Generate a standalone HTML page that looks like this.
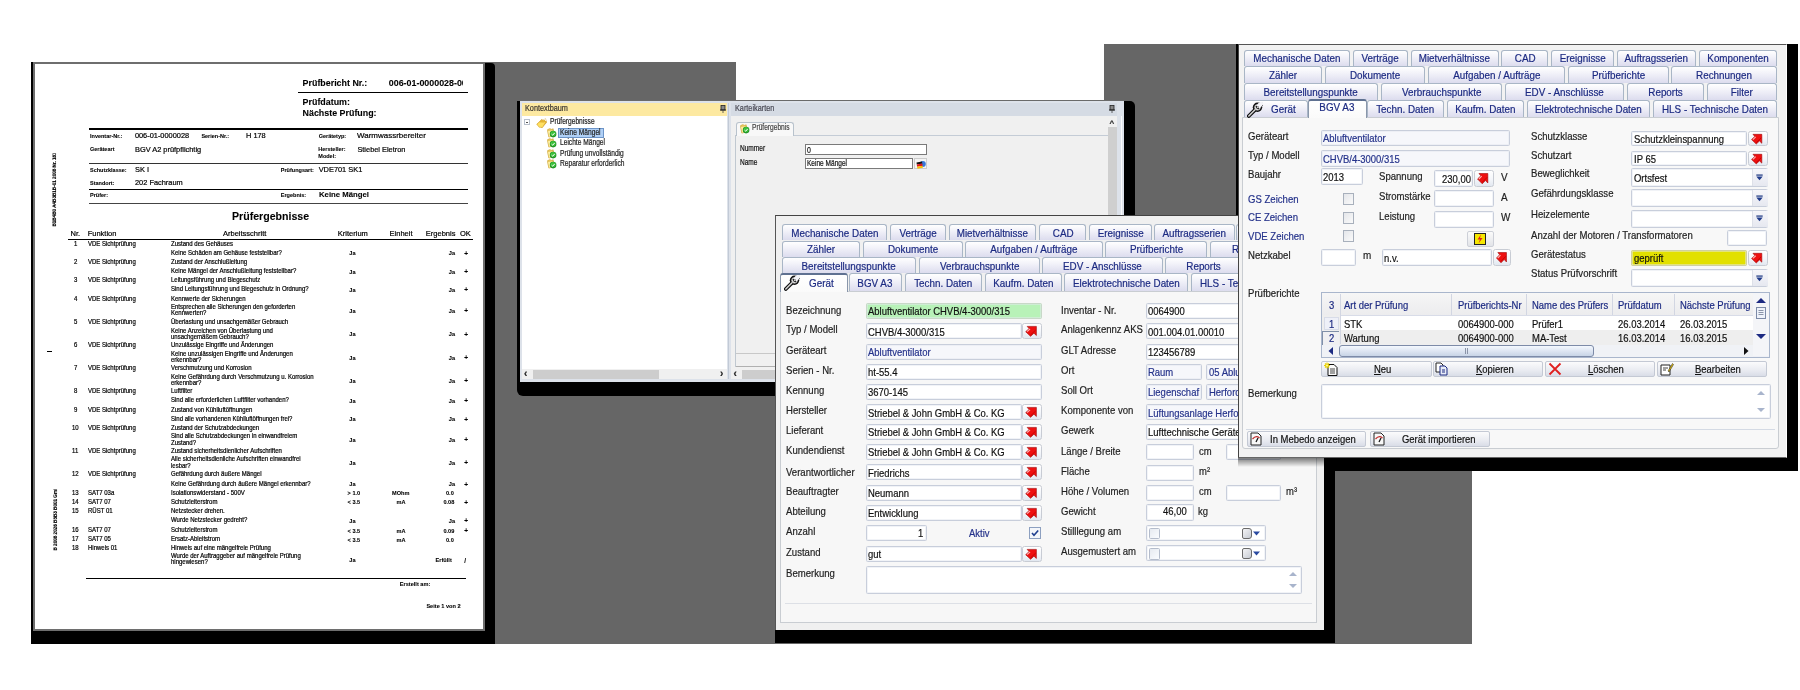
<!DOCTYPE html>
<html><head><meta charset="utf-8"><style>
html,body{margin:0;padding:0;width:1800px;height:690px;overflow:hidden;background:#fff}
body{position:relative;font-family:"Liberation Sans",sans-serif}
div,svg{position:absolute}
.t{white-space:nowrap;line-height:1;transform-origin:0 0;-webkit-text-stroke:0.2px currentColor}
.c{text-align:center}
</style></head><body><div id="w" style="left:0;top:0;width:1800px;height:690px;overflow:hidden;will-change:transform">
<div style="left:484px;top:62px;width:988px;height:581.5px;background:#666666"></div><div style="left:736px;top:62px;width:368px;height:37.5px;background:#fff"></div><div style="left:1104px;top:44px;width:368px;height:30px;background:#666666"></div><div style="left:31px;top:63px;width:464px;height:580.5px;background:#000;border-top-right-radius:4px"></div><div style="left:31px;top:62px;width:2px;height:2px;background:#000"></div><div style="left:33px;top:62px;width:452px;height:569px;background:#6e6e6e"></div><div style="left:35px;top:64px;width:448px;height:565px;background:#fff"></div><div style="left:35px;top:64px;width:448px;height:565px;overflow:hidden"><div class="t" style="left:267.6px;top:14.7px;font-size:8.9px;color:#000;font-weight:bold;-webkit-text-stroke:0.08px #000">Prüfbericht Nr.:</div><div class="t" style="left:353.8px;top:14.7px;font-size:8.9px;color:#000;font-weight:bold;-webkit-text-stroke:0.08px #000">006-01-0000028-000</div><div style="left:428px;top:14px;width:20px;height:12px;background:#fff"></div><div style="left:263px;top:27.799999999999997px;width:169.5px;height:1.5px;background:#000"></div><div class="t" style="left:267.6px;top:34.2px;font-size:8.9px;color:#000;font-weight:bold;-webkit-text-stroke:0.08px #000">Prüfdatum:</div><div class="t" style="left:267.6px;top:45.2px;font-size:8.9px;color:#000;font-weight:bold;-webkit-text-stroke:0.08px #000">Nächste Prüfung:</div><div style="left:54px;top:64.0px;width:378.5px;height:1.5px;background:#000"></div><div class="t" style="left:55.0px;top:69.6px;font-size:5.5px;color:#000;font-weight:bold;-webkit-text-stroke:0.08px #000">Inventar-Nr.:</div><div class="t" style="left:99.9px;top:68.0px;font-size:7.4px;color:#000;-webkit-text-stroke:0.2px #000">006-01-0000028</div><div class="t" style="left:166.4px;top:69.6px;font-size:5.5px;color:#000;font-weight:bold;-webkit-text-stroke:0.08px #000">Serien-Nr.:</div><div class="t" style="left:211.0px;top:68.0px;font-size:7.4px;color:#000;-webkit-text-stroke:0.2px #000">H 178</div><div class="t" style="left:283.7px;top:69.6px;font-size:5.5px;color:#000;font-weight:bold;-webkit-text-stroke:0.08px #000">Gerätetyp:</div><div class="t" style="left:322.4px;top:68.0px;font-size:7.4px;color:#000;transform:scaleX(1.08);-webkit-text-stroke:0.2px #000">Warmwassrbereiter</div><div class="t" style="left:55.0px;top:83.1px;font-size:5.5px;color:#000;font-weight:bold;-webkit-text-stroke:0.08px #000">Geräteart</div><div class="t" style="left:100.0px;top:81.5px;font-size:7.4px;color:#000;-webkit-text-stroke:0.2px #000">BGV A2 prüfpflichtig</div><div class="t" style="left:283.3px;top:83.1px;font-size:5.5px;color:#000;font-weight:bold;-webkit-text-stroke:0.08px #000">Hersteller:</div><div class="t" style="left:322.4px;top:81.5px;font-size:7.4px;color:#000;-webkit-text-stroke:0.2px #000">Stiebel Eletron</div><div class="t" style="left:283.3px;top:90.3px;font-size:5.5px;color:#000;font-weight:bold;-webkit-text-stroke:0.08px #000">Model:</div><div style="left:54px;top:99.0px;width:378.5px;height:1.0px;background:#333"></div><div class="t" style="left:55.0px;top:103.9px;font-size:5.5px;color:#000;font-weight:bold;-webkit-text-stroke:0.08px #000">Schutzklasse:</div><div class="t" style="left:100.0px;top:102.3px;font-size:7.4px;color:#000;-webkit-text-stroke:0.2px #000">SK I</div><div class="t" style="left:245.8px;top:103.9px;font-size:5.5px;color:#000;font-weight:bold;-webkit-text-stroke:0.08px #000">Prüfungsart:</div><div class="t" style="left:283.7px;top:102.3px;font-size:7.4px;color:#000;-webkit-text-stroke:0.2px #000">VDE701 SK1</div><div class="t" style="left:55.0px;top:116.8px;font-size:5.5px;color:#000;font-weight:bold;-webkit-text-stroke:0.08px #000">Standort:</div><div class="t" style="left:100.0px;top:115.2px;font-size:7.4px;color:#000;-webkit-text-stroke:0.2px #000">202 Fachraum</div><div style="left:54px;top:125.19999999999999px;width:378.5px;height:1.3px;background:#000"></div><div class="t" style="left:55.0px;top:129.0px;font-size:5.5px;color:#000;font-weight:bold;-webkit-text-stroke:0.08px #000">Prüfer:</div><div class="t" style="left:245.8px;top:129.0px;font-size:5.5px;color:#000;font-weight:bold;-webkit-text-stroke:0.08px #000">Ergebnis:</div><div class="t" style="left:284.0px;top:127.4px;font-size:7.4px;color:#000;font-weight:bold;transform:scaleX(1.05);-webkit-text-stroke:0.08px #000">Keine Mängel</div><div style="left:54px;top:138.6px;width:378.5px;height:1.0px;background:#444"></div><div class="t" style="left:197.0px;top:147.2px;font-size:10.6px;color:#000;font-weight:bold;-webkit-text-stroke:0.08px #000">Prüfergebnisse</div><div class="t" style="left:35.6px;top:165.6px;font-size:7.5px;color:#000;-webkit-text-stroke:0.2px #000">Nr.</div><div class="t" style="left:52.7px;top:165.6px;font-size:7.5px;color:#000;-webkit-text-stroke:0.2px #000">Funktion</div><div class="t" style="left:188.0px;top:165.6px;font-size:7.5px;color:#000;-webkit-text-stroke:0.2px #000">Arbeitsschritt</div><div class="t" style="left:302.8px;top:165.6px;font-size:7.5px;color:#000;-webkit-text-stroke:0.2px #000">Kriterium</div><div class="t" style="left:354.6px;top:165.6px;font-size:7.5px;color:#000;-webkit-text-stroke:0.2px #000">Einheit</div><div class="t" style="left:390.8px;top:165.6px;font-size:7.5px;color:#000;-webkit-text-stroke:0.2px #000">Ergebnis</div><div class="t" style="left:425.0px;top:165.6px;font-size:7.5px;color:#000;-webkit-text-stroke:0.2px #000">OK</div><div style="left:33px;top:174.8px;width:404.7px;height:1.5px;background:#000"></div><div class="t" style="left:39.2px;top:176.6px;font-size:6.4px;color:#000;transform:scaleX(0.94);-webkit-text-stroke:0.2px #000">1</div><div class="t" style="left:52.7px;top:176.6px;font-size:6.4px;color:#000;transform:scaleX(0.94);-webkit-text-stroke:0.2px #000">VDE Sichtprüfung</div><div class="t" style="left:136.3px;top:176.6px;font-size:6.4px;color:#000;transform:scaleX(0.94);-webkit-text-stroke:0.2px #000">Zustand des Gehäuses</div><div class="t" style="left:136.3px;top:185.6px;font-size:6.4px;color:#000;transform:scaleX(0.94);-webkit-text-stroke:0.2px #000">Keine Schäden am Gehäuse feststellbar?</div><div class="t" style="left:314.3px;top:187.2px;font-size:5.6px;color:#000;font-weight:bold;-webkit-text-stroke:0.08px #000">Ja</div><div class="t" style="left:413.8px;top:187.2px;font-size:5.6px;color:#000;font-weight:bold;-webkit-text-stroke:0.08px #000">Ja</div><div class="t" style="left:429.2px;top:186.5px;font-size:6.5px;color:#000;font-weight:bold;-webkit-text-stroke:0.08px #000">+</div><div class="t" style="left:39.2px;top:194.9px;font-size:6.4px;color:#000;transform:scaleX(0.94);-webkit-text-stroke:0.2px #000">2</div><div class="t" style="left:52.7px;top:194.9px;font-size:6.4px;color:#000;transform:scaleX(0.94);-webkit-text-stroke:0.2px #000">VDE Sichtprüfung</div><div class="t" style="left:136.3px;top:194.9px;font-size:6.4px;color:#000;transform:scaleX(0.94);-webkit-text-stroke:0.2px #000">Zustand der Anschlußleitung</div><div class="t" style="left:136.3px;top:204.2px;font-size:6.4px;color:#000;transform:scaleX(0.94);-webkit-text-stroke:0.2px #000">Keine Mängel der Anschlußleitung feststellbar?</div><div class="t" style="left:314.3px;top:205.8px;font-size:5.6px;color:#000;font-weight:bold;-webkit-text-stroke:0.08px #000">Ja</div><div class="t" style="left:413.8px;top:205.8px;font-size:5.6px;color:#000;font-weight:bold;-webkit-text-stroke:0.08px #000">Ja</div><div class="t" style="left:429.2px;top:205.1px;font-size:6.5px;color:#000;font-weight:bold;-webkit-text-stroke:0.08px #000">+</div><div class="t" style="left:39.2px;top:213.3px;font-size:6.4px;color:#000;transform:scaleX(0.94);-webkit-text-stroke:0.2px #000">3</div><div class="t" style="left:52.7px;top:213.3px;font-size:6.4px;color:#000;transform:scaleX(0.94);-webkit-text-stroke:0.2px #000">VDE Sichtprüfung</div><div class="t" style="left:136.3px;top:213.3px;font-size:6.4px;color:#000;transform:scaleX(0.94);-webkit-text-stroke:0.2px #000">Leitungsführung und Biegeschutz</div><div class="t" style="left:136.3px;top:222.3px;font-size:6.4px;color:#000;transform:scaleX(0.94);-webkit-text-stroke:0.2px #000">Sind Leitungsführung und Biegeschutz in Ordnung?</div><div class="t" style="left:314.3px;top:223.9px;font-size:5.6px;color:#000;font-weight:bold;-webkit-text-stroke:0.08px #000">Ja</div><div class="t" style="left:413.8px;top:223.9px;font-size:5.6px;color:#000;font-weight:bold;-webkit-text-stroke:0.08px #000">Ja</div><div class="t" style="left:429.2px;top:223.2px;font-size:6.5px;color:#000;font-weight:bold;-webkit-text-stroke:0.08px #000">+</div><div class="t" style="left:39.2px;top:231.6px;font-size:6.4px;color:#000;transform:scaleX(0.94);-webkit-text-stroke:0.2px #000">4</div><div class="t" style="left:52.7px;top:231.6px;font-size:6.4px;color:#000;transform:scaleX(0.94);-webkit-text-stroke:0.2px #000">VDE Sichtprüfung</div><div class="t" style="left:136.3px;top:231.6px;font-size:6.4px;color:#000;transform:scaleX(0.94);-webkit-text-stroke:0.2px #000">Kennwerte der Sicherungen</div><div class="t" style="left:136.3px;top:240.2px;font-size:6.4px;color:#000;transform:scaleX(0.94);-webkit-text-stroke:0.2px #000">Entsprechen alle Sicherungen den geforderten</div><div class="t" style="left:136.3px;top:246.3px;font-size:6.4px;color:#000;transform:scaleX(0.94);-webkit-text-stroke:0.2px #000">Kennwerten?</div><div class="t" style="left:314.3px;top:244.9px;font-size:5.6px;color:#000;font-weight:bold;-webkit-text-stroke:0.08px #000">Ja</div><div class="t" style="left:413.8px;top:244.9px;font-size:5.6px;color:#000;font-weight:bold;-webkit-text-stroke:0.08px #000">Ja</div><div class="t" style="left:429.2px;top:244.2px;font-size:6.5px;color:#000;font-weight:bold;-webkit-text-stroke:0.08px #000">+</div><div class="t" style="left:39.2px;top:254.8px;font-size:6.4px;color:#000;transform:scaleX(0.94);-webkit-text-stroke:0.2px #000">5</div><div class="t" style="left:52.7px;top:254.8px;font-size:6.4px;color:#000;transform:scaleX(0.94);-webkit-text-stroke:0.2px #000">VDE Sichtprüfung</div><div class="t" style="left:136.3px;top:254.8px;font-size:6.4px;color:#000;transform:scaleX(0.94);-webkit-text-stroke:0.2px #000">Überlastung und unsachgemäßer Gebrauch</div><div class="t" style="left:136.3px;top:264.1px;font-size:6.4px;color:#000;transform:scaleX(0.94);-webkit-text-stroke:0.2px #000">Keine Anzeichen von Überlastung und</div><div class="t" style="left:136.3px;top:270.2px;font-size:6.4px;color:#000;transform:scaleX(0.94);-webkit-text-stroke:0.2px #000">unsachgemäßem Gebrauch?</div><div class="t" style="left:314.3px;top:268.4px;font-size:5.6px;color:#000;font-weight:bold;-webkit-text-stroke:0.08px #000">Ja</div><div class="t" style="left:413.8px;top:268.4px;font-size:5.6px;color:#000;font-weight:bold;-webkit-text-stroke:0.08px #000">Ja</div><div class="t" style="left:429.2px;top:267.7px;font-size:6.5px;color:#000;font-weight:bold;-webkit-text-stroke:0.08px #000">+</div><div class="t" style="left:39.2px;top:278.1px;font-size:6.4px;color:#000;transform:scaleX(0.94);-webkit-text-stroke:0.2px #000">6</div><div class="t" style="left:52.7px;top:278.1px;font-size:6.4px;color:#000;transform:scaleX(0.94);-webkit-text-stroke:0.2px #000">VDE Sichtprüfung</div><div class="t" style="left:136.3px;top:278.1px;font-size:6.4px;color:#000;transform:scaleX(0.94);-webkit-text-stroke:0.2px #000">Unzulässige Eingriffe und Änderungen</div><div class="t" style="left:136.3px;top:287.2px;font-size:6.4px;color:#000;transform:scaleX(0.94);-webkit-text-stroke:0.2px #000">Keine unzulässigen Eingriffe und Änderungen</div><div class="t" style="left:136.3px;top:293.3px;font-size:6.4px;color:#000;transform:scaleX(0.94);-webkit-text-stroke:0.2px #000">erkennbar?</div><div class="t" style="left:314.3px;top:291.7px;font-size:5.6px;color:#000;font-weight:bold;-webkit-text-stroke:0.08px #000">Ja</div><div class="t" style="left:413.8px;top:291.7px;font-size:5.6px;color:#000;font-weight:bold;-webkit-text-stroke:0.08px #000">Ja</div><div class="t" style="left:429.2px;top:291.0px;font-size:6.5px;color:#000;font-weight:bold;-webkit-text-stroke:0.08px #000">+</div><div class="t" style="left:39.2px;top:301.3px;font-size:6.4px;color:#000;transform:scaleX(0.94);-webkit-text-stroke:0.2px #000">7</div><div class="t" style="left:52.7px;top:301.3px;font-size:6.4px;color:#000;transform:scaleX(0.94);-webkit-text-stroke:0.2px #000">VDE Sichtprüfung</div><div class="t" style="left:136.3px;top:301.3px;font-size:6.4px;color:#000;transform:scaleX(0.94);-webkit-text-stroke:0.2px #000">Verschmutzung und Korrosion</div><div class="t" style="left:136.3px;top:310.3px;font-size:6.4px;color:#000;transform:scaleX(0.94);-webkit-text-stroke:0.2px #000">Keine Gefährdung durch Verschmutzung u. Korrosion</div><div class="t" style="left:136.3px;top:316.4px;font-size:6.4px;color:#000;transform:scaleX(0.94);-webkit-text-stroke:0.2px #000">erkennbar?</div><div class="t" style="left:314.3px;top:314.9px;font-size:5.6px;color:#000;font-weight:bold;-webkit-text-stroke:0.08px #000">Ja</div><div class="t" style="left:413.8px;top:314.9px;font-size:5.6px;color:#000;font-weight:bold;-webkit-text-stroke:0.08px #000">Ja</div><div class="t" style="left:429.2px;top:314.2px;font-size:6.5px;color:#000;font-weight:bold;-webkit-text-stroke:0.08px #000">+</div><div class="t" style="left:39.2px;top:324.2px;font-size:6.4px;color:#000;transform:scaleX(0.94);-webkit-text-stroke:0.2px #000">8</div><div class="t" style="left:52.7px;top:324.2px;font-size:6.4px;color:#000;transform:scaleX(0.94);-webkit-text-stroke:0.2px #000">VDE Sichtprüfung</div><div class="t" style="left:136.3px;top:324.2px;font-size:6.4px;color:#000;transform:scaleX(0.94);-webkit-text-stroke:0.2px #000">Luftfilter</div><div class="t" style="left:136.3px;top:333.2px;font-size:6.4px;color:#000;transform:scaleX(0.94);-webkit-text-stroke:0.2px #000">Sind alle erforderlichen Luftfilter vorhanden?</div><div class="t" style="left:314.3px;top:334.8px;font-size:5.6px;color:#000;font-weight:bold;-webkit-text-stroke:0.08px #000">Ja</div><div class="t" style="left:413.8px;top:334.8px;font-size:5.6px;color:#000;font-weight:bold;-webkit-text-stroke:0.08px #000">Ja</div><div class="t" style="left:429.2px;top:334.1px;font-size:6.5px;color:#000;font-weight:bold;-webkit-text-stroke:0.08px #000">+</div><div class="t" style="left:39.2px;top:342.5px;font-size:6.4px;color:#000;transform:scaleX(0.94);-webkit-text-stroke:0.2px #000">9</div><div class="t" style="left:52.7px;top:342.5px;font-size:6.4px;color:#000;transform:scaleX(0.94);-webkit-text-stroke:0.2px #000">VDE Sichtprüfung</div><div class="t" style="left:136.3px;top:342.5px;font-size:6.4px;color:#000;transform:scaleX(0.94);-webkit-text-stroke:0.2px #000">Zustand von Kühlluftöffnungen</div><div class="t" style="left:136.3px;top:351.6px;font-size:6.4px;color:#000;transform:scaleX(0.94);-webkit-text-stroke:0.2px #000">Sind alle vorhandenen Kühlluftöffnungen frei?</div><div class="t" style="left:314.3px;top:353.2px;font-size:5.6px;color:#000;font-weight:bold;-webkit-text-stroke:0.08px #000">Ja</div><div class="t" style="left:413.8px;top:353.2px;font-size:5.6px;color:#000;font-weight:bold;-webkit-text-stroke:0.08px #000">Ja</div><div class="t" style="left:429.2px;top:352.5px;font-size:6.5px;color:#000;font-weight:bold;-webkit-text-stroke:0.08px #000">+</div><div class="t" style="left:36.5px;top:360.8px;font-size:6.4px;color:#000;transform:scaleX(0.94);-webkit-text-stroke:0.2px #000">10</div><div class="t" style="left:52.7px;top:360.8px;font-size:6.4px;color:#000;transform:scaleX(0.94);-webkit-text-stroke:0.2px #000">VDE Sichtprüfung</div><div class="t" style="left:136.3px;top:360.8px;font-size:6.4px;color:#000;transform:scaleX(0.94);-webkit-text-stroke:0.2px #000">Zustand der Schutzabdeckungen</div><div class="t" style="left:136.3px;top:368.9px;font-size:6.4px;color:#000;transform:scaleX(0.94);-webkit-text-stroke:0.2px #000">Sind alle Schutzabdeckungen in einwandfreiem</div><div class="t" style="left:136.3px;top:375.5px;font-size:6.4px;color:#000;transform:scaleX(0.94);-webkit-text-stroke:0.2px #000">Zustand?</div><div class="t" style="left:314.3px;top:373.9px;font-size:5.6px;color:#000;font-weight:bold;-webkit-text-stroke:0.08px #000">Ja</div><div class="t" style="left:413.8px;top:373.9px;font-size:5.6px;color:#000;font-weight:bold;-webkit-text-stroke:0.08px #000">Ja</div><div class="t" style="left:429.2px;top:373.2px;font-size:6.5px;color:#000;font-weight:bold;-webkit-text-stroke:0.08px #000">+</div><div class="t" style="left:36.5px;top:384.1px;font-size:6.4px;color:#000;transform:scaleX(0.94);-webkit-text-stroke:0.2px #000">11</div><div class="t" style="left:52.7px;top:384.1px;font-size:6.4px;color:#000;transform:scaleX(0.94);-webkit-text-stroke:0.2px #000">VDE Sichtprüfung</div><div class="t" style="left:136.3px;top:384.1px;font-size:6.4px;color:#000;transform:scaleX(0.94);-webkit-text-stroke:0.2px #000">Zustand sicherheitsdienlicher Aufschriften</div><div class="t" style="left:136.3px;top:391.9px;font-size:6.4px;color:#000;transform:scaleX(0.94);-webkit-text-stroke:0.2px #000">Alle sicherheitsdienliche Aufschriften einwandfrei</div><div class="t" style="left:136.3px;top:398.7px;font-size:6.4px;color:#000;transform:scaleX(0.94);-webkit-text-stroke:0.2px #000">lesbar?</div><div class="t" style="left:314.3px;top:396.9px;font-size:5.6px;color:#000;font-weight:bold;-webkit-text-stroke:0.08px #000">Ja</div><div class="t" style="left:413.8px;top:396.9px;font-size:5.6px;color:#000;font-weight:bold;-webkit-text-stroke:0.08px #000">Ja</div><div class="t" style="left:429.2px;top:396.2px;font-size:6.5px;color:#000;font-weight:bold;-webkit-text-stroke:0.08px #000">+</div><div class="t" style="left:36.5px;top:407.3px;font-size:6.4px;color:#000;transform:scaleX(0.94);-webkit-text-stroke:0.2px #000">12</div><div class="t" style="left:52.7px;top:407.3px;font-size:6.4px;color:#000;transform:scaleX(0.94);-webkit-text-stroke:0.2px #000">VDE Sichtprüfung</div><div class="t" style="left:136.3px;top:407.3px;font-size:6.4px;color:#000;transform:scaleX(0.94);-webkit-text-stroke:0.2px #000">Gefährdung durch äußere Mängel</div><div class="t" style="left:136.3px;top:416.6px;font-size:6.4px;color:#000;transform:scaleX(0.94);-webkit-text-stroke:0.2px #000">Keine Gefährdung durch äußere Mängel erkennbar?</div><div class="t" style="left:314.3px;top:418.2px;font-size:5.6px;color:#000;font-weight:bold;-webkit-text-stroke:0.08px #000">Ja</div><div class="t" style="left:413.8px;top:418.2px;font-size:5.6px;color:#000;font-weight:bold;-webkit-text-stroke:0.08px #000">Ja</div><div class="t" style="left:429.2px;top:417.5px;font-size:6.5px;color:#000;font-weight:bold;-webkit-text-stroke:0.08px #000">+</div><div class="t" style="left:36.5px;top:425.6px;font-size:6.4px;color:#000;transform:scaleX(0.94);-webkit-text-stroke:0.2px #000">13</div><div class="t" style="left:52.7px;top:425.6px;font-size:6.4px;color:#000;transform:scaleX(0.94);-webkit-text-stroke:0.2px #000">SAT7 03a</div><div class="t" style="left:136.3px;top:425.6px;font-size:6.4px;color:#000;transform:scaleX(0.94);-webkit-text-stroke:0.2px #000">Isolationswiderstand - 500V</div><div class="t" style="left:312.6px;top:427.2px;font-size:5.6px;color:#000;font-weight:bold;-webkit-text-stroke:0.08px #000">&gt; 1.0</div><div class="t" style="left:357.0px;top:427.2px;font-size:5.6px;color:#000;font-weight:bold;-webkit-text-stroke:0.08px #000">MOhm</div><div class="t" style="left:411.0px;top:427.2px;font-size:5.6px;color:#000;font-weight:bold;-webkit-text-stroke:0.08px #000">0.0</div><div class="t" style="left:36.5px;top:434.6px;font-size:6.4px;color:#000;transform:scaleX(0.94);-webkit-text-stroke:0.2px #000">14</div><div class="t" style="left:52.7px;top:434.6px;font-size:6.4px;color:#000;transform:scaleX(0.94);-webkit-text-stroke:0.2px #000">SAT7 07</div><div class="t" style="left:136.3px;top:434.6px;font-size:6.4px;color:#000;transform:scaleX(0.94);-webkit-text-stroke:0.2px #000">Schutzleiterstrom</div><div class="t" style="left:312.6px;top:436.2px;font-size:5.6px;color:#000;font-weight:bold;-webkit-text-stroke:0.08px #000">&lt; 3.5</div><div class="t" style="left:361.5px;top:436.2px;font-size:5.6px;color:#000;font-weight:bold;-webkit-text-stroke:0.08px #000">mA</div><div class="t" style="left:408.4px;top:436.2px;font-size:5.6px;color:#000;font-weight:bold;-webkit-text-stroke:0.08px #000">0.08</div><div class="t" style="left:429.2px;top:435.5px;font-size:6.5px;color:#000;font-weight:bold;-webkit-text-stroke:0.08px #000">+</div><div class="t" style="left:36.5px;top:444.0px;font-size:6.4px;color:#000;transform:scaleX(0.94);-webkit-text-stroke:0.2px #000">15</div><div class="t" style="left:52.7px;top:444.0px;font-size:6.4px;color:#000;transform:scaleX(0.94);-webkit-text-stroke:0.2px #000">RÜST 01</div><div class="t" style="left:136.3px;top:444.0px;font-size:6.4px;color:#000;transform:scaleX(0.94);-webkit-text-stroke:0.2px #000">Netzstecker drehen.</div><div class="t" style="left:136.3px;top:453.0px;font-size:6.4px;color:#000;transform:scaleX(0.94);-webkit-text-stroke:0.2px #000">Wurde Netzstecker gedreht?</div><div class="t" style="left:314.3px;top:454.6px;font-size:5.6px;color:#000;font-weight:bold;-webkit-text-stroke:0.08px #000">Ja</div><div class="t" style="left:413.8px;top:454.6px;font-size:5.6px;color:#000;font-weight:bold;-webkit-text-stroke:0.08px #000">Ja</div><div class="t" style="left:429.2px;top:453.9px;font-size:6.5px;color:#000;font-weight:bold;-webkit-text-stroke:0.08px #000">+</div><div class="t" style="left:36.5px;top:463.0px;font-size:6.4px;color:#000;transform:scaleX(0.94);-webkit-text-stroke:0.2px #000">16</div><div class="t" style="left:52.7px;top:463.0px;font-size:6.4px;color:#000;transform:scaleX(0.94);-webkit-text-stroke:0.2px #000">SAT7 07</div><div class="t" style="left:136.3px;top:463.0px;font-size:6.4px;color:#000;transform:scaleX(0.94);-webkit-text-stroke:0.2px #000">Schutzleiterstrom</div><div class="t" style="left:312.6px;top:464.6px;font-size:5.6px;color:#000;font-weight:bold;-webkit-text-stroke:0.08px #000">&lt; 3.5</div><div class="t" style="left:361.5px;top:464.6px;font-size:5.6px;color:#000;font-weight:bold;-webkit-text-stroke:0.08px #000">mA</div><div class="t" style="left:408.4px;top:464.6px;font-size:5.6px;color:#000;font-weight:bold;-webkit-text-stroke:0.08px #000">0.09</div><div class="t" style="left:429.2px;top:463.9px;font-size:6.5px;color:#000;font-weight:bold;-webkit-text-stroke:0.08px #000">+</div><div class="t" style="left:36.5px;top:472.1px;font-size:6.4px;color:#000;transform:scaleX(0.94);-webkit-text-stroke:0.2px #000">17</div><div class="t" style="left:52.7px;top:472.1px;font-size:6.4px;color:#000;transform:scaleX(0.94);-webkit-text-stroke:0.2px #000">SAT7 05</div><div class="t" style="left:136.3px;top:472.1px;font-size:6.4px;color:#000;transform:scaleX(0.94);-webkit-text-stroke:0.2px #000">Ersatz-Ableitstrom</div><div class="t" style="left:312.6px;top:473.7px;font-size:5.6px;color:#000;font-weight:bold;-webkit-text-stroke:0.08px #000">&lt; 3.5</div><div class="t" style="left:361.5px;top:473.7px;font-size:5.6px;color:#000;font-weight:bold;-webkit-text-stroke:0.08px #000">mA</div><div class="t" style="left:411.0px;top:473.7px;font-size:5.6px;color:#000;font-weight:bold;-webkit-text-stroke:0.08px #000">0.0</div><div class="t" style="left:36.5px;top:480.6px;font-size:6.4px;color:#000;transform:scaleX(0.94);-webkit-text-stroke:0.2px #000">18</div><div class="t" style="left:52.7px;top:480.6px;font-size:6.4px;color:#000;transform:scaleX(0.94);-webkit-text-stroke:0.2px #000">Hinweis 01</div><div class="t" style="left:136.3px;top:480.6px;font-size:6.4px;color:#000;transform:scaleX(0.94);-webkit-text-stroke:0.2px #000">Hinweis auf eine mängelfreie Prüfung</div><div class="t" style="left:136.3px;top:488.7px;font-size:6.4px;color:#000;transform:scaleX(0.94);-webkit-text-stroke:0.2px #000">Wurde der Auftraggeber auf mängelfreie Prüfung</div><div class="t" style="left:136.3px;top:495.1px;font-size:6.4px;color:#000;transform:scaleX(0.94);-webkit-text-stroke:0.2px #000">hingewiesen?</div><div class="t" style="left:314.3px;top:494.2px;font-size:5.6px;color:#000;font-weight:bold;-webkit-text-stroke:0.08px #000">Ja</div><div class="t" style="left:400.6px;top:494.2px;font-size:5.6px;color:#000;font-weight:bold;-webkit-text-stroke:0.08px #000">Erfüllt</div><div class="t" style="left:429.2px;top:493.5px;font-size:6.5px;color:#000;font-weight:bold;-webkit-text-stroke:0.08px #000">/</div><div style="left:50.5px;top:513.5px;width:380.0px;height:1.3px;background:#000"></div><div class="t" style="left:364.8px;top:518.2px;font-size:5.6px;color:#000;font-weight:bold;-webkit-text-stroke:0.08px #000">Erstellt am:</div><div class="t" style="left:391.4px;top:540.2px;font-size:5.6px;color:#000;font-weight:bold;-webkit-text-stroke:0.08px #000">Seite 1 von 2</div></div><div class="t" style="left:17.5px;top:188px;width:73px;height:4px;font-size:4.6px;font-weight:bold;transform:rotate(-90deg);transform-origin:50% 50%;text-align:justify;text-align-last:justify;overflow:hidden">B1B4B0 A4B3B1B-01 2008 Nr. 181204</div><div class="t" style="left:24.5px;top:518px;width:61px;height:4px;font-size:4.6px;font-weight:bold;transform:rotate(-90deg);transform-origin:50% 50%;text-align:justify;text-align-last:justify;overflow:hidden">B 2008 2026 B5B3 B001 GmbH Nr.</div><div style="left:47px;top:351px;width:5px;height:1px;background:#000"></div>
<div style="left:517px;top:100.5px;width:618px;height:295.5px;background:#000;border-radius:0 5px 0 6px"></div><div style="left:520px;top:100px;width:604px;height:282px;background:#dde2ea;border-top:1px solid #6a6a6a;box-sizing:border-box"></div><div style="left:727.5px;top:103px;width:1.2px;height:276px;background:#c2cad6"></div><div style="left:522px;top:103px;width:205px;height:13px;background:#fde9a1"></div><div class="t" style="left:525.2px;top:105.0px;font-size:8.2px;color:#3a3530;transform:scaleX(0.89);">Kontextbaum</div><svg style="position:absolute;left:719.5px;top:104.5px" width="6" height="8" viewBox="0 0 6 8"><rect x="1" y="0.5" width="4" height="4.5" fill="#888" stroke="#222" stroke-width="0.8"/><path d="M0 5 H6" stroke="#222" stroke-width="1"/><path d="M3 5 V8" stroke="#444" stroke-width="0.8"/></svg><div style="left:522px;top:116px;width:205px;height:263px;background:#fff"></div><div style="left:522px;top:369px;width:205px;height:10px;background:#f0f0f0"></div><div style="left:533px;top:369.6px;width:126px;height:9px;background:#cdcdcd"></div><div class="t" style="left:524.0px;top:368.5px;font-size:10px;color:#222;font-weight:bold;">‹</div><div class="t" style="left:720.0px;top:368.5px;font-size:10px;color:#222;font-weight:bold;">›</div><div style="left:524.2px;top:119.2px;width:5.5px;height:5.5px;border:1px solid #b8c0cc;background:#fff;box-sizing:border-box"></div><div style="left:525.6px;top:121.6px;width:2.7px;height:0.9px;background:#555"></div><svg style="position:absolute;left:535.5px;top:117.5px" width="11" height="10" viewBox="0 0 11 10"><path d="M1 6.5 L5.5 1.5 L7 2.2 L9.5 0.8 L10.5 4.5 L6 9.5 Z" fill="#e8b830" stroke="#c89020" stroke-width="0.6"/><path d="M0.8 6 L3.5 4 L7.5 4.2 L10 3.5 L6.5 9.5 L3 9.2 Z" fill="#ffe060" stroke="#d0a030" stroke-width="0.5"/><path d="M7.6 1.8 L9.2 1 L9.6 3" stroke="#fff" stroke-width="0.8" fill="none"/></svg><div class="t" style="left:549.7px;top:117.8px;font-size:8.2px;color:#222;transform:scaleX(0.81);">Prüfergebnisse</div><div style="left:558px;top:128.1px;width:45.6px;height:9.6px;background:#b0d0f6;border:1px solid #6c94c8;box-sizing:border-box"></div><svg style="position:absolute;left:546.8px;top:127.80000000000001px" width="10" height="10" viewBox="0 0 10 10"><path d="M0.6 1.6 L3 0.6 L4.2 1.4 L6.2 0.8 L6.8 6 L1.8 8.8 Z" fill="#f2d060" stroke="#c8a030" stroke-width="0.6"/><path d="M0.5 2.6 L5.8 2 L6.8 7.5 L2 9.2 Z" fill="#fff0a0" stroke="#d0a840" stroke-width="0.5"/><circle cx="6.1" cy="6.1" r="3.3" fill="#1f8f24"/><circle cx="6.1" cy="5.6" r="2.6" fill="#3cc03c"/><path d="M4.6 6.2 L5.7 7.2 L7.7 4.9" stroke="#fff" stroke-width="1" fill="none"/></svg><div class="t" style="left:560.3px;top:128.9px;font-size:8.2px;color:#222;transform:scaleX(0.81);">Keine Mängel</div><svg style="position:absolute;left:546.8px;top:138.20000000000002px" width="10" height="10" viewBox="0 0 10 10"><path d="M0.6 1.6 L3 0.6 L4.2 1.4 L6.2 0.8 L6.8 6 L1.8 8.8 Z" fill="#f2d060" stroke="#c8a030" stroke-width="0.6"/><path d="M0.5 2.6 L5.8 2 L6.8 7.5 L2 9.2 Z" fill="#fff0a0" stroke="#d0a840" stroke-width="0.5"/><circle cx="6.1" cy="6.1" r="3.3" fill="#1f8f24"/><circle cx="6.1" cy="5.6" r="2.6" fill="#3cc03c"/><path d="M4.6 6.2 L5.7 7.2 L7.7 4.9" stroke="#fff" stroke-width="1" fill="none"/></svg><div class="t" style="left:560.3px;top:139.3px;font-size:8.2px;color:#222;transform:scaleX(0.81);">Leichte Mängel</div><svg style="position:absolute;left:546.8px;top:148.6px" width="10" height="10" viewBox="0 0 10 10"><path d="M0.6 1.6 L3 0.6 L4.2 1.4 L6.2 0.8 L6.8 6 L1.8 8.8 Z" fill="#f2d060" stroke="#c8a030" stroke-width="0.6"/><path d="M0.5 2.6 L5.8 2 L6.8 7.5 L2 9.2 Z" fill="#fff0a0" stroke="#d0a840" stroke-width="0.5"/><circle cx="6.1" cy="6.1" r="3.3" fill="#1f8f24"/><circle cx="6.1" cy="5.6" r="2.6" fill="#3cc03c"/><path d="M4.6 6.2 L5.7 7.2 L7.7 4.9" stroke="#fff" stroke-width="1" fill="none"/></svg><div class="t" style="left:560.3px;top:149.7px;font-size:8.2px;color:#222;transform:scaleX(0.81);">Prüfung unvollständig</div><svg style="position:absolute;left:546.8px;top:159.20000000000002px" width="10" height="10" viewBox="0 0 10 10"><path d="M0.6 1.6 L3 0.6 L4.2 1.4 L6.2 0.8 L6.8 6 L1.8 8.8 Z" fill="#f2d060" stroke="#c8a030" stroke-width="0.6"/><path d="M0.5 2.6 L5.8 2 L6.8 7.5 L2 9.2 Z" fill="#fff0a0" stroke="#d0a840" stroke-width="0.5"/><circle cx="6.1" cy="6.1" r="3.3" fill="#1f8f24"/><circle cx="6.1" cy="5.6" r="2.6" fill="#3cc03c"/><path d="M4.6 6.2 L5.7 7.2 L7.7 4.9" stroke="#fff" stroke-width="1" fill="none"/></svg><div class="t" style="left:560.3px;top:160.3px;font-size:8.2px;color:#222;transform:scaleX(0.81);">Reparatur erforderlich</div><div style="left:731px;top:103px;width:386px;height:13px;background:#d5dbe4"></div><div class="t" style="left:734.5px;top:105.0px;font-size:8.2px;color:#4a4a55;transform:scaleX(0.89);">Karteikarten</div><svg style="position:absolute;left:1108.5px;top:104.5px" width="6" height="8" viewBox="0 0 6 8"><rect x="1" y="0.5" width="4" height="4.5" fill="#888" stroke="#222" stroke-width="0.8"/><path d="M0 5 H6" stroke="#222" stroke-width="1"/><path d="M3 5 V8" stroke="#444" stroke-width="0.8"/></svg><div style="left:731px;top:116px;width:377px;height:263px;background:#f0f0f0"></div><div style="left:1108px;top:116px;width:9px;height:263px;background:#cfcfcf"></div><div style="left:1108px;top:116px;width:9px;height:11px;background:#f0f0f0"></div><div class="t" style="left:1109.5px;top:119.2px;font-size:8px;color:#333;font-weight:bold;">˄</div><div style="left:735px;top:134.5px;width:373px;height:1.5px;background:#c4ccd6"></div><div style="left:736px;top:121.5px;width:58px;height:14px;background:#f8f8f8;border:1px solid #b8c2cc;border-bottom:none;border-radius:3px 3px 0 0;box-sizing:border-box"></div><svg style="position:absolute;left:739.5px;top:123.8px" width="10" height="10" viewBox="0 0 10 10"><path d="M0.6 1.6 L3 0.6 L4.2 1.4 L6.2 0.8 L6.8 6 L1.8 8.8 Z" fill="#f2d060" stroke="#c8a030" stroke-width="0.6"/><path d="M0.5 2.6 L5.8 2 L6.8 7.5 L2 9.2 Z" fill="#fff0a0" stroke="#d0a840" stroke-width="0.5"/><circle cx="6.1" cy="6.1" r="3.3" fill="#1f8f24"/><circle cx="6.1" cy="5.6" r="2.6" fill="#3cc03c"/><path d="M4.6 6.2 L5.7 7.2 L7.7 4.9" stroke="#fff" stroke-width="1" fill="none"/></svg><div class="t" style="left:751.5px;top:124.3px;font-size:8.2px;color:#444;transform:scaleX(0.81);">Prüfergebnis</div><div class="t" style="left:739.8px;top:144.6px;font-size:8.2px;color:#111;transform:scaleX(0.8);">Nummer</div><div class="t" style="left:739.8px;top:159.3px;font-size:8.2px;color:#111;transform:scaleX(0.8);">Name</div><div style="left:804.5px;top:144.1px;width:122px;height:11.2px;background:#fff;border:1px solid #7a7a7a;box-sizing:border-box"></div><div class="t" style="left:806.5px;top:146.5px;font-size:8.2px;color:#111;transform:scaleX(0.85);">0</div><div style="left:804.5px;top:158.1px;width:108px;height:11.2px;background:#fff;border:1px solid #7a7a7a;box-sizing:border-box"></div><div class="t" style="left:806.5px;top:160.3px;font-size:8.2px;color:#111;transform:scaleX(0.8);">Keine Mängel</div><div style="left:913.7px;top:158.1px;width:13.5px;height:11.2px;background:#f4f4f4;border:1px solid #ccc;box-sizing:border-box"></div><svg style="position:absolute;left:915.5px;top:159.5px" width="10" height="9" viewBox="0 0 10 9"><circle cx="6.8" cy="4" r="3" fill="#3a78d8"/><path d="M0.5 2.5 L6 1.5 L6.3 3.6 L0.8 4.6 Z" fill="#111"/><path d="M0.8 4.6 L6.3 3.6 L6.6 5.7 L1.1 6.7 Z" fill="#e01818"/><path d="M1.1 6.7 L6.6 5.7 L6.9 7.8 L1.4 8.8 Z" fill="#f8c000"/></svg><div style="left:1121px;top:116px;width:1px;height:263px;background:#fafbfc"></div><div style="left:735.4px;top:353px;width:373px;height:1px;background:#c8c8c8"></div><div style="left:735.4px;top:366px;width:373px;height:1px;background:#b0b0b0"></div><div style="left:735.4px;top:134.5px;width:1px;height:232.5px;background:#c0c8d0"></div><div style="left:731px;top:369px;width:377px;height:10px;background:#f0f0f0"></div><div style="left:742px;top:369.6px;width:366px;height:9px;background:#cdcdcd"></div><div class="t" style="left:733.5px;top:368.5px;font-size:10px;color:#222;font-weight:bold;">‹</div>
<div style="left:1236px;top:44px;width:2px;height:172px;background:#000"></div><div style="left:775px;top:215px;width:560px;height:428px;background:#000"></div><div style="left:775px;top:215px;width:549px;height:415px;background:#f0f0f0;border-left:1px solid #555;border-top:1px solid #444;box-sizing:border-box"></div><div style="left:780px;top:290.5px;width:537px;height:332px;background:#f7f7f7;border:1px solid #c9cdd2;box-sizing:border-box"></div><div style="left:781.7px;top:224.4px;width:105.69999999999993px;height:16.099999999999994px;background:linear-gradient(#ffffff 0%,#f0f0f8 45%,#dcdcee 100%);border:1px solid #a9b6c6;border-bottom:none;border-radius:3px 3px 0 0;box-sizing:border-box"></div><div class="t c" style="left:781.7px;top:227.8px;width:105.69999999999993px;font-size:10.6px;color:#1c2a82"><span style="display:inline-block;transform:scaleX(0.93)">Mechanische Daten</span></div><div style="left:890px;top:224.4px;width:56px;height:16.099999999999994px;background:linear-gradient(#ffffff 0%,#f0f0f8 45%,#dcdcee 100%);border:1px solid #a9b6c6;border-bottom:none;border-radius:3px 3px 0 0;box-sizing:border-box"></div><div class="t c" style="left:890px;top:227.8px;width:56px;font-size:10.6px;color:#1c2a82"><span style="display:inline-block;transform:scaleX(0.93)">Verträge</span></div><div style="left:948.5px;top:224.4px;width:87.79999999999995px;height:16.099999999999994px;background:linear-gradient(#ffffff 0%,#f0f0f8 45%,#dcdcee 100%);border:1px solid #a9b6c6;border-bottom:none;border-radius:3px 3px 0 0;box-sizing:border-box"></div><div class="t c" style="left:948.5px;top:227.8px;width:87.79999999999995px;font-size:10.6px;color:#1c2a82"><span style="display:inline-block;transform:scaleX(0.93)">Mietverhältnisse</span></div><div style="left:1039.4px;top:224.4px;width:47.09999999999991px;height:16.099999999999994px;background:linear-gradient(#ffffff 0%,#f0f0f8 45%,#dcdcee 100%);border:1px solid #a9b6c6;border-bottom:none;border-radius:3px 3px 0 0;box-sizing:border-box"></div><div class="t c" style="left:1039.4px;top:227.8px;width:47.09999999999991px;font-size:10.6px;color:#1c2a82"><span style="display:inline-block;transform:scaleX(0.93)">CAD</span></div><div style="left:1088.6px;top:224.4px;width:63.700000000000045px;height:16.099999999999994px;background:linear-gradient(#ffffff 0%,#f0f0f8 45%,#dcdcee 100%);border:1px solid #a9b6c6;border-bottom:none;border-radius:3px 3px 0 0;box-sizing:border-box"></div><div class="t c" style="left:1088.6px;top:227.8px;width:63.700000000000045px;font-size:10.6px;color:#1c2a82"><span style="display:inline-block;transform:scaleX(0.93)">Ereignisse</span></div><div style="left:1154.4px;top:224.4px;width:80.19999999999982px;height:16.099999999999994px;background:linear-gradient(#ffffff 0%,#f0f0f8 45%,#dcdcee 100%);border:1px solid #a9b6c6;border-bottom:none;border-radius:3px 3px 0 0;box-sizing:border-box"></div><div class="t c" style="left:1154.4px;top:227.8px;width:80.19999999999982px;font-size:10.6px;color:#1c2a82"><span style="display:inline-block;transform:scaleX(0.93)">Auftragsserien</span></div><div style="left:1236px;top:224.4px;width:64px;height:16.099999999999994px;background:linear-gradient(#ffffff 0%,#f0f0f8 45%,#dcdcee 100%);border:1px solid #a9b6c6;border-bottom:none;border-radius:3px 3px 0 0;box-sizing:border-box"></div><div class="t c" style="left:1236px;top:227.8px;width:64px;font-size:10.6px;color:#1c2a82"><span style="display:inline-block;transform:scaleX(0.93)">Komponenten</span></div><div style="left:781.7px;top:240.5px;width:78.5px;height:16.5px;background:linear-gradient(#ffffff 0%,#f0f0f8 45%,#dcdcee 100%);border:1px solid #a9b6c6;border-bottom:none;border-radius:3px 3px 0 0;box-sizing:border-box"></div><div class="t c" style="left:781.7px;top:244.1px;width:78.5px;font-size:10.6px;color:#1c2a82"><span style="display:inline-block;transform:scaleX(0.93)">Zähler</span></div><div style="left:862.5px;top:240.5px;width:100.70000000000005px;height:16.5px;background:linear-gradient(#ffffff 0%,#f0f0f8 45%,#dcdcee 100%);border:1px solid #a9b6c6;border-bottom:none;border-radius:3px 3px 0 0;box-sizing:border-box"></div><div class="t c" style="left:862.5px;top:244.1px;width:100.70000000000005px;font-size:10.6px;color:#1c2a82"><span style="display:inline-block;transform:scaleX(0.93)">Dokumente</span></div><div style="left:965.2px;top:240.5px;width:138.0px;height:16.5px;background:linear-gradient(#ffffff 0%,#f0f0f8 45%,#dcdcee 100%);border:1px solid #a9b6c6;border-bottom:none;border-radius:3px 3px 0 0;box-sizing:border-box"></div><div class="t c" style="left:965.2px;top:244.1px;width:138.0px;font-size:10.6px;color:#1c2a82"><span style="display:inline-block;transform:scaleX(0.93)">Aufgaben / Aufträge</span></div><div style="left:1105.4px;top:240.5px;width:101.59999999999991px;height:16.5px;background:linear-gradient(#ffffff 0%,#f0f0f8 45%,#dcdcee 100%);border:1px solid #a9b6c6;border-bottom:none;border-radius:3px 3px 0 0;box-sizing:border-box"></div><div class="t c" style="left:1105.4px;top:244.1px;width:101.59999999999991px;font-size:10.6px;color:#1c2a82"><span style="display:inline-block;transform:scaleX(0.93)">Prüfberichte</span></div><div style="left:1209.5px;top:240.5px;width:100.5px;height:16.5px;background:linear-gradient(#ffffff 0%,#f0f0f8 45%,#dcdcee 100%);border:1px solid #a9b6c6;border-bottom:none;border-radius:3px 3px 0 0;box-sizing:border-box"></div><div class="t c" style="left:1209.5px;top:244.1px;width:100.5px;font-size:10.6px;color:#1c2a82"><span style="display:inline-block;transform:scaleX(0.93)">Rechnungen</span></div><div style="left:781.7px;top:257px;width:134.5px;height:16.399999999999977px;background:linear-gradient(#ffffff 0%,#f0f0f8 45%,#dcdcee 100%);border:1px solid #a9b6c6;border-bottom:none;border-radius:3px 3px 0 0;box-sizing:border-box"></div><div class="t c" style="left:781.7px;top:260.5px;width:134.5px;font-size:10.6px;color:#1c2a82"><span style="display:inline-block;transform:scaleX(0.93)">Bereitstellungspunkte</span></div><div style="left:918.5px;top:257px;width:121.79999999999995px;height:16.399999999999977px;background:linear-gradient(#ffffff 0%,#f0f0f8 45%,#dcdcee 100%);border:1px solid #a9b6c6;border-bottom:none;border-radius:3px 3px 0 0;box-sizing:border-box"></div><div class="t c" style="left:918.5px;top:260.5px;width:121.79999999999995px;font-size:10.6px;color:#1c2a82"><span style="display:inline-block;transform:scaleX(0.93)">Verbrauchspunkte</span></div><div style="left:1042px;top:257px;width:120.59999999999991px;height:16.399999999999977px;background:linear-gradient(#ffffff 0%,#f0f0f8 45%,#dcdcee 100%);border:1px solid #a9b6c6;border-bottom:none;border-radius:3px 3px 0 0;box-sizing:border-box"></div><div class="t c" style="left:1042px;top:260.5px;width:120.59999999999991px;font-size:10.6px;color:#1c2a82"><span style="display:inline-block;transform:scaleX(0.93)">EDV - Anschlüsse</span></div><div style="left:1165.2px;top:257px;width:77.39999999999986px;height:16.399999999999977px;background:linear-gradient(#ffffff 0%,#f0f0f8 45%,#dcdcee 100%);border:1px solid #a9b6c6;border-bottom:none;border-radius:3px 3px 0 0;box-sizing:border-box"></div><div class="t c" style="left:1165.2px;top:260.5px;width:77.39999999999986px;font-size:10.6px;color:#1c2a82"><span style="display:inline-block;transform:scaleX(0.93)">Reports</span></div><div style="left:1245px;top:257px;width:71px;height:16.399999999999977px;background:linear-gradient(#ffffff 0%,#f0f0f8 45%,#dcdcee 100%);border:1px solid #a9b6c6;border-bottom:none;border-radius:3px 3px 0 0;box-sizing:border-box"></div><div class="t c" style="left:1245px;top:260.5px;width:71px;font-size:10.6px;color:#1c2a82"><span style="display:inline-block;transform:scaleX(0.93)">Filter</span></div><div style="left:848.5px;top:273.4px;width:53.700000000000045px;height:17.900000000000034px;background:linear-gradient(#ffffff 0%,#f0f0f8 45%,#dcdcee 100%);border:1px solid #a9b6c6;border-bottom:none;border-radius:3px 3px 0 0;box-sizing:border-box"></div><div class="t c" style="left:848.5px;top:277.7px;width:53.700000000000045px;font-size:10.6px;color:#1c2a82"><span style="display:inline-block;transform:scaleX(0.93)">BGV A3</span></div><div style="left:904.5px;top:273.4px;width:77.79999999999995px;height:17.900000000000034px;background:linear-gradient(#ffffff 0%,#f0f0f8 45%,#dcdcee 100%);border:1px solid #a9b6c6;border-bottom:none;border-radius:3px 3px 0 0;box-sizing:border-box"></div><div class="t c" style="left:904.5px;top:277.7px;width:77.79999999999995px;font-size:10.6px;color:#1c2a82"><span style="display:inline-block;transform:scaleX(0.93)">Techn. Daten</span></div><div style="left:984.6px;top:273.4px;width:76.99999999999989px;height:17.900000000000034px;background:linear-gradient(#ffffff 0%,#f0f0f8 45%,#dcdcee 100%);border:1px solid #a9b6c6;border-bottom:none;border-radius:3px 3px 0 0;box-sizing:border-box"></div><div class="t c" style="left:984.6px;top:277.7px;width:76.99999999999989px;font-size:10.6px;color:#1c2a82"><span style="display:inline-block;transform:scaleX(0.93)">Kaufm. Daten</span></div><div style="left:1064px;top:273.4px;width:124px;height:17.900000000000034px;background:linear-gradient(#ffffff 0%,#f0f0f8 45%,#dcdcee 100%);border:1px solid #a9b6c6;border-bottom:none;border-radius:3px 3px 0 0;box-sizing:border-box"></div><div class="t c" style="left:1064px;top:277.7px;width:124px;font-size:10.6px;color:#1c2a82"><span style="display:inline-block;transform:scaleX(0.93)">Elektrotechnische Daten</span></div><div style="left:1190.5px;top:273.4px;width:125.5px;height:17.900000000000034px;background:linear-gradient(#ffffff 0%,#f0f0f8 45%,#dcdcee 100%);border:1px solid #a9b6c6;border-bottom:none;border-radius:3px 3px 0 0;box-sizing:border-box"></div><div class="t c" style="left:1190.5px;top:277.7px;width:125.5px;font-size:10.6px;color:#1c2a82"><span style="display:inline-block;transform:scaleX(0.93)">HLS - Technische Daten</span></div><div style="left:780px;top:273.1px;width:67.79999999999995px;height:18.5px;background:linear-gradient(#ffffff,#fafafa);border:1px solid #8a97ab;border-top:2px solid #5f7191;border-bottom:none;border-radius:3px 3px 0 0;box-sizing:border-box"></div><div class="t c" style="left:780px;top:276.7px;width:67.79999999999995px;font-size:10.6px;color:#1c2a82"><span style="display:inline-block;transform:scaleX(0.93)"></span></div><div class="t" style="left:809.0px;top:278.3px;font-size:10.6px;color:#1c2a82;transform:scaleX(0.93);">Gerät</div><svg style="position:absolute;left:784px;top:275px" width="16" height="16" viewBox="0 0 16 16"><path d="M1.8 14 L8 7.8" stroke="#111" stroke-width="3.8" stroke-linecap="round"/><circle cx="10.5" cy="5.3" r="4.7" fill="#111"/><path d="M1.8 14 L8 7.8" stroke="#d4d4d4" stroke-width="1.5" stroke-linecap="round"/><circle cx="10.5" cy="5.3" r="3.1" fill="#d4d4d4"/><path d="M9.2 4.2 L13.6 -0.2 L16.2 2.4 L11.8 6.8 Z" fill="#f4f4f8" stroke="#111" stroke-width="1.1"/><path d="M9 3.6 L14 -1.4 L17 1.6 L12.4 7 Z" fill="#f4f4f8"/><circle cx="10.6" cy="5.4" r="1.3" fill="#111"/><circle cx="10.9" cy="5.1" r="0.9" fill="#fff"/></svg><div class="t" style="left:786.0px;top:304.6px;font-size:11px;color:#222;transform:scaleX(0.87);">Bezeichnung</div><div class="t" style="left:786.0px;top:324.4px;font-size:11px;color:#222;transform:scaleX(0.87);">Typ / Modell</div><div class="t" style="left:786.0px;top:344.6px;font-size:11px;color:#222;transform:scaleX(0.87);">Geräteart</div><div class="t" style="left:786.0px;top:365.4px;font-size:11px;color:#222;transform:scaleX(0.87);">Serien - Nr.</div><div class="t" style="left:786.0px;top:385.0px;font-size:11px;color:#222;transform:scaleX(0.87);">Kennung</div><div class="t" style="left:786.0px;top:404.6px;font-size:11px;color:#222;transform:scaleX(0.87);">Hersteller</div><div class="t" style="left:786.0px;top:424.6px;font-size:11px;color:#222;transform:scaleX(0.87);">Lieferant</div><div class="t" style="left:786.0px;top:445.0px;font-size:11px;color:#222;transform:scaleX(0.87);">Kundendienst</div><div class="t" style="left:786.0px;top:466.5px;font-size:11px;color:#222;transform:scaleX(0.87);">Verantwortlicher</div><div class="t" style="left:786.0px;top:485.8px;font-size:11px;color:#222;transform:scaleX(0.87);">Beauftragter</div><div class="t" style="left:786.0px;top:505.9px;font-size:11px;color:#222;transform:scaleX(0.87);">Abteilung</div><div class="t" style="left:786.0px;top:526.0px;font-size:11px;color:#222;transform:scaleX(0.87);">Anzahl</div><div class="t" style="left:786.0px;top:547.0px;font-size:11px;color:#222;transform:scaleX(0.87);">Zustand</div><div class="t" style="left:786.0px;top:567.6px;font-size:11px;color:#222;transform:scaleX(0.87);">Bemerkung</div><div style="left:865.8px;top:303px;width:175.9000000000001px;height:16px;background:#b8f2b8;border:1px solid #c8d8c8;border-radius:1.5px;box-shadow:inset 0 0 0 0.5px #e4e8f0;box-sizing:border-box"></div><div class="t" style="left:868.0px;top:306.2px;font-size:11px;color:#111;transform:scaleX(0.86);">Abluftventilator CHVB/4-3000/315</div><div style="left:865.8px;top:323.4px;width:155.80000000000007px;height:16.0px;background:#fff;border:1px solid #c8cedb;border-radius:1.5px;box-shadow:inset 0 0 0 0.5px #e4e8f0;box-sizing:border-box"></div><div style="left:1021.6px;top:323.4px;width:20.100000000000023px;height:16.0px;background:linear-gradient(#ffffff,#f4f6fa 55%,#e2e8f0);border:1px solid #c8ccd4;border-radius:2.5px;box-sizing:border-box"></div><svg style="position:absolute;left:1021.6px;top:323.4px" width="20.100000000000023" height="16.0" viewBox="0 0 19 16" preserveAspectRatio="none"><path d="M4.9 3.4 L13.6 3.4 L13.6 12.5 L11.3 10.2 L8.1 13.3 L3.5 8.7 L6.7 5.6 Z" fill="#ee1010" stroke="#a00808" stroke-width="0.6" stroke-linejoin="round"/><path d="M4.8 8.7 L7.6 5.9" stroke="#ffb0b0" stroke-width="1.1"/><path d="M8 12 L13 7" stroke="#c00000" stroke-width="0.8"/></svg><div class="t" style="left:868.0px;top:326.6px;font-size:11px;color:#111;transform:scaleX(0.86);">CHVB/4-3000/315</div><div style="left:865.8px;top:343.5px;width:175.9000000000001px;height:16.0px;background:#f6f7fb;border:1px solid #c8cedb;border-radius:1.5px;box-shadow:inset 0 0 0 0.5px #e4e8f0;box-sizing:border-box"></div><div class="t" style="left:868.0px;top:346.8px;font-size:11px;color:#24328a;transform:scaleX(0.86);">Abluftventilator</div><div style="left:865.8px;top:363.6px;width:175.9000000000001px;height:16.0px;background:#fff;border:1px solid #c8cedb;border-radius:1.5px;box-shadow:inset 0 0 0 0.5px #e4e8f0;box-sizing:border-box"></div><div class="t" style="left:868.0px;top:366.9px;font-size:11px;color:#111;transform:scaleX(0.86);">ht-55.4</div><div style="left:865.8px;top:384px;width:175.9000000000001px;height:16px;background:#fff;border:1px solid #c8cedb;border-radius:1.5px;box-shadow:inset 0 0 0 0.5px #e4e8f0;box-sizing:border-box"></div><div class="t" style="left:868.0px;top:387.2px;font-size:11px;color:#111;transform:scaleX(0.86);">3670-145</div><div style="left:865.8px;top:404.3px;width:155.80000000000007px;height:16.0px;background:#fff;border:1px solid #c8cedb;border-radius:1.5px;box-shadow:inset 0 0 0 0.5px #e4e8f0;box-sizing:border-box"></div><div style="left:1021.6px;top:404.3px;width:20.100000000000023px;height:16.0px;background:linear-gradient(#ffffff,#f4f6fa 55%,#e2e8f0);border:1px solid #c8ccd4;border-radius:2.5px;box-sizing:border-box"></div><svg style="position:absolute;left:1021.6px;top:404.3px" width="20.100000000000023" height="16.0" viewBox="0 0 19 16" preserveAspectRatio="none"><path d="M4.9 3.4 L13.6 3.4 L13.6 12.5 L11.3 10.2 L8.1 13.3 L3.5 8.7 L6.7 5.6 Z" fill="#ee1010" stroke="#a00808" stroke-width="0.6" stroke-linejoin="round"/><path d="M4.8 8.7 L7.6 5.9" stroke="#ffb0b0" stroke-width="1.1"/><path d="M8 12 L13 7" stroke="#c00000" stroke-width="0.8"/></svg><div class="t" style="left:868.0px;top:407.6px;font-size:11px;color:#111;transform:scaleX(0.86);">Striebel &amp; John GmbH &amp; Co. KG</div><div style="left:865.8px;top:423.6px;width:155.80000000000007px;height:16.0px;background:#fff;border:1px solid #c8cedb;border-radius:1.5px;box-shadow:inset 0 0 0 0.5px #e4e8f0;box-sizing:border-box"></div><div style="left:1021.6px;top:423.6px;width:20.100000000000023px;height:16.0px;background:linear-gradient(#ffffff,#f4f6fa 55%,#e2e8f0);border:1px solid #c8ccd4;border-radius:2.5px;box-sizing:border-box"></div><svg style="position:absolute;left:1021.6px;top:423.6px" width="20.100000000000023" height="16.0" viewBox="0 0 19 16" preserveAspectRatio="none"><path d="M4.9 3.4 L13.6 3.4 L13.6 12.5 L11.3 10.2 L8.1 13.3 L3.5 8.7 L6.7 5.6 Z" fill="#ee1010" stroke="#a00808" stroke-width="0.6" stroke-linejoin="round"/><path d="M4.8 8.7 L7.6 5.9" stroke="#ffb0b0" stroke-width="1.1"/><path d="M8 12 L13 7" stroke="#c00000" stroke-width="0.8"/></svg><div class="t" style="left:868.0px;top:426.9px;font-size:11px;color:#111;transform:scaleX(0.86);">Striebel &amp; John GmbH &amp; Co. KG</div><div style="left:865.8px;top:444px;width:155.80000000000007px;height:16px;background:#fff;border:1px solid #c8cedb;border-radius:1.5px;box-shadow:inset 0 0 0 0.5px #e4e8f0;box-sizing:border-box"></div><div style="left:1021.6px;top:444px;width:20.100000000000023px;height:16px;background:linear-gradient(#ffffff,#f4f6fa 55%,#e2e8f0);border:1px solid #c8ccd4;border-radius:2.5px;box-sizing:border-box"></div><svg style="position:absolute;left:1021.6px;top:444px" width="20.100000000000023" height="16" viewBox="0 0 19 16" preserveAspectRatio="none"><path d="M4.9 3.4 L13.6 3.4 L13.6 12.5 L11.3 10.2 L8.1 13.3 L3.5 8.7 L6.7 5.6 Z" fill="#ee1010" stroke="#a00808" stroke-width="0.6" stroke-linejoin="round"/><path d="M4.8 8.7 L7.6 5.9" stroke="#ffb0b0" stroke-width="1.1"/><path d="M8 12 L13 7" stroke="#c00000" stroke-width="0.8"/></svg><div class="t" style="left:868.0px;top:447.2px;font-size:11px;color:#111;transform:scaleX(0.86);">Striebel &amp; John GmbH &amp; Co. KG</div><div style="left:865.8px;top:464.4px;width:155.80000000000007px;height:16.0px;background:#fff;border:1px solid #c8cedb;border-radius:1.5px;box-shadow:inset 0 0 0 0.5px #e4e8f0;box-sizing:border-box"></div><div style="left:1021.6px;top:464.4px;width:20.100000000000023px;height:16.0px;background:linear-gradient(#ffffff,#f4f6fa 55%,#e2e8f0);border:1px solid #c8ccd4;border-radius:2.5px;box-sizing:border-box"></div><svg style="position:absolute;left:1021.6px;top:464.4px" width="20.100000000000023" height="16.0" viewBox="0 0 19 16" preserveAspectRatio="none"><path d="M4.9 3.4 L13.6 3.4 L13.6 12.5 L11.3 10.2 L8.1 13.3 L3.5 8.7 L6.7 5.6 Z" fill="#ee1010" stroke="#a00808" stroke-width="0.6" stroke-linejoin="round"/><path d="M4.8 8.7 L7.6 5.9" stroke="#ffb0b0" stroke-width="1.1"/><path d="M8 12 L13 7" stroke="#c00000" stroke-width="0.8"/></svg><div class="t" style="left:868.0px;top:467.6px;font-size:11px;color:#111;transform:scaleX(0.86);">Friedrichs</div><div style="left:865.8px;top:485px;width:155.80000000000007px;height:16px;background:#fff;border:1px solid #c8cedb;border-radius:1.5px;box-shadow:inset 0 0 0 0.5px #e4e8f0;box-sizing:border-box"></div><div style="left:1021.6px;top:485px;width:20.100000000000023px;height:16px;background:linear-gradient(#ffffff,#f4f6fa 55%,#e2e8f0);border:1px solid #c8ccd4;border-radius:2.5px;box-sizing:border-box"></div><svg style="position:absolute;left:1021.6px;top:485px" width="20.100000000000023" height="16" viewBox="0 0 19 16" preserveAspectRatio="none"><path d="M4.9 3.4 L13.6 3.4 L13.6 12.5 L11.3 10.2 L8.1 13.3 L3.5 8.7 L6.7 5.6 Z" fill="#ee1010" stroke="#a00808" stroke-width="0.6" stroke-linejoin="round"/><path d="M4.8 8.7 L7.6 5.9" stroke="#ffb0b0" stroke-width="1.1"/><path d="M8 12 L13 7" stroke="#c00000" stroke-width="0.8"/></svg><div class="t" style="left:868.0px;top:488.2px;font-size:11px;color:#111;transform:scaleX(0.86);">Neumann</div><div style="left:865.8px;top:504.6px;width:155.80000000000007px;height:16.0px;background:#fff;border:1px solid #c8cedb;border-radius:1.5px;box-shadow:inset 0 0 0 0.5px #e4e8f0;box-sizing:border-box"></div><div style="left:1021.6px;top:504.6px;width:20.100000000000023px;height:16.0px;background:linear-gradient(#ffffff,#f4f6fa 55%,#e2e8f0);border:1px solid #c8ccd4;border-radius:2.5px;box-sizing:border-box"></div><svg style="position:absolute;left:1021.6px;top:504.6px" width="20.100000000000023" height="16.0" viewBox="0 0 19 16" preserveAspectRatio="none"><path d="M4.9 3.4 L13.6 3.4 L13.6 12.5 L11.3 10.2 L8.1 13.3 L3.5 8.7 L6.7 5.6 Z" fill="#ee1010" stroke="#a00808" stroke-width="0.6" stroke-linejoin="round"/><path d="M4.8 8.7 L7.6 5.9" stroke="#ffb0b0" stroke-width="1.1"/><path d="M8 12 L13 7" stroke="#c00000" stroke-width="0.8"/></svg><div class="t" style="left:868.0px;top:507.9px;font-size:11px;color:#111;transform:scaleX(0.86);">Entwicklung</div><div style="left:865.6px;top:524.7px;width:61.69999999999993px;height:16.0px;background:#fff;border:1px solid #c8cedb;border-radius:1.5px;box-shadow:inset 0 0 0 0.5px #e4e8f0;box-sizing:border-box"></div><div class="t" style="left:918.0px;top:528.0px;font-size:11px;color:#111;transform:scaleX(0.86);">1</div><div class="t" style="left:968.6px;top:528.0px;font-size:11px;color:#24328a;transform:scaleX(0.86);">Aktiv</div><div style="left:1029.2px;top:527.4px;width:11.8px;height:11.3px;background:#f4f6fa;border:1px solid #8da0c0;box-sizing:border-box"></div><svg style="position:absolute;left:1030px;top:528px" width="10" height="10" viewBox="0 0 10 10"><path d="M2 5 L4 7.3 L8.2 2.5" stroke="#1f3f8f" stroke-width="1.6" fill="none"/></svg><div style="left:865.8px;top:545.6px;width:155.80000000000007px;height:16.0px;background:#fff;border:1px solid #c8cedb;border-radius:1.5px;box-shadow:inset 0 0 0 0.5px #e4e8f0;box-sizing:border-box"></div><div style="left:1021.6px;top:545.6px;width:20.100000000000023px;height:16.0px;background:linear-gradient(#ffffff,#f4f6fa 55%,#e2e8f0);border:1px solid #c8ccd4;border-radius:2.5px;box-sizing:border-box"></div><svg style="position:absolute;left:1021.6px;top:545.6px" width="20.100000000000023" height="16.0" viewBox="0 0 19 16" preserveAspectRatio="none"><path d="M4.9 3.4 L13.6 3.4 L13.6 12.5 L11.3 10.2 L8.1 13.3 L3.5 8.7 L6.7 5.6 Z" fill="#ee1010" stroke="#a00808" stroke-width="0.6" stroke-linejoin="round"/><path d="M4.8 8.7 L7.6 5.9" stroke="#ffb0b0" stroke-width="1.1"/><path d="M8 12 L13 7" stroke="#c00000" stroke-width="0.8"/></svg><div class="t" style="left:868.0px;top:548.9px;font-size:11px;color:#111;transform:scaleX(0.86);">gut</div><div style="left:865.6px;top:566.3px;width:436.69999999999993px;height:28.100000000000023px;background:#fff;border:1px solid #c8cedb;border-radius:1.5px;box-shadow:inset 0 0 0 0.5px #e4e8f0;box-sizing:border-box"></div><svg style="position:absolute;left:1288px;top:569px" width="10" height="22" viewBox="0 0 10 22"><path d="M1 7 L5 3 L9 7 Z" fill="#a8b4cc"/><path d="M1 15 L5 19 L9 15 Z" fill="#a8b4cc"/></svg><div style="left:785.2px;top:602.5px;width:527px;height:1.2px;background:#dde0e6"></div><div class="t" style="left:1060.9px;top:305.4px;font-size:11px;color:#222;transform:scaleX(0.87);">Inventar - Nr.</div><div class="t" style="left:1060.9px;top:324.4px;font-size:11px;color:#222;transform:scaleX(0.87);">Anlagenkennz AKS</div><div class="t" style="left:1060.9px;top:344.6px;font-size:11px;color:#222;transform:scaleX(0.87);">GLT Adresse</div><div class="t" style="left:1060.9px;top:365.4px;font-size:11px;color:#222;transform:scaleX(0.87);">Ort</div><div class="t" style="left:1060.9px;top:385.0px;font-size:11px;color:#222;transform:scaleX(0.87);">Soll Ort</div><div class="t" style="left:1060.9px;top:404.6px;font-size:11px;color:#222;transform:scaleX(0.87);">Komponente von</div><div class="t" style="left:1060.9px;top:424.6px;font-size:11px;color:#222;transform:scaleX(0.87);">Gewerk</div><div class="t" style="left:1060.9px;top:445.6px;font-size:11px;color:#222;transform:scaleX(0.87);">Länge / Breite</div><div class="t" style="left:1060.9px;top:466.0px;font-size:11px;color:#222;transform:scaleX(0.87);">Fläche</div><div class="t" style="left:1060.9px;top:485.6px;font-size:11px;color:#222;transform:scaleX(0.87);">Höhe / Volumen</div><div class="t" style="left:1060.9px;top:506.0px;font-size:11px;color:#222;transform:scaleX(0.87);"> Gewicht</div><div class="t" style="left:1060.9px;top:526.4px;font-size:11px;color:#222;transform:scaleX(0.87);">Stilllegung am</div><div class="t" style="left:1060.9px;top:546.0px;font-size:11px;color:#222;transform:scaleX(0.87);">Ausgemustert am</div><div style="left:1145.7px;top:303px;width:94.29999999999995px;height:16px;background:#fff;border:1px solid #c8cedb;border-radius:1.5px;box-shadow:inset 0 0 0 0.5px #e4e8f0;box-sizing:border-box"></div><div class="t" style="left:1148.0px;top:306.2px;font-size:11px;color:#111;transform:scaleX(0.86);">0064900</div><div style="left:1145.7px;top:323.4px;width:94.29999999999995px;height:16.0px;background:#fff;border:1px solid #c8cedb;border-radius:1.5px;box-shadow:inset 0 0 0 0.5px #e4e8f0;box-sizing:border-box"></div><div class="t" style="left:1148.0px;top:326.6px;font-size:11px;color:#111;transform:scaleX(0.86);">001.004.01.00010</div><div style="left:1145.7px;top:343.5px;width:94.29999999999995px;height:16.0px;background:#fff;border:1px solid #c8cedb;border-radius:1.5px;box-shadow:inset 0 0 0 0.5px #e4e8f0;box-sizing:border-box"></div><div class="t" style="left:1148.0px;top:346.8px;font-size:11px;color:#111;transform:scaleX(0.86);">123456789</div><div style="left:1145.7px;top:363.6px;width:56.59999999999991px;height:16.0px;background:#f6f7fb;border:1px solid #c8cedb;border-radius:1.5px;box-shadow:inset 0 0 0 0.5px #e4e8f0;box-sizing:border-box"></div><div class="t" style="left:1148.0px;top:366.9px;font-size:11px;color:#24328a;transform:scaleX(0.86);">Raum</div><div style="left:1206.2px;top:363.6px;width:53.799999999999955px;height:16.0px;background:#f6f7fb;border:1px solid #c8cedb;border-radius:1.5px;box-shadow:inset 0 0 0 0.5px #e4e8f0;box-sizing:border-box"></div><div class="t" style="left:1208.5px;top:366.9px;font-size:11px;color:#24328a;transform:scaleX(0.86);">05 Abluft</div><div style="left:1145.7px;top:384px;width:56.59999999999991px;height:16px;background:#f6f7fb;border:1px solid #c8cedb;border-radius:1.5px;box-shadow:inset 0 0 0 0.5px #e4e8f0;box-sizing:border-box"></div><div class="t" style="left:1148.0px;top:387.2px;font-size:11px;color:#24328a;transform:scaleX(0.86);">Liegenschaf</div><div style="left:1206.2px;top:384px;width:53.799999999999955px;height:16px;background:#f6f7fb;border:1px solid #c8cedb;border-radius:1.5px;box-shadow:inset 0 0 0 0.5px #e4e8f0;box-sizing:border-box"></div><div class="t" style="left:1208.5px;top:387.2px;font-size:11px;color:#24328a;transform:scaleX(0.86);">Herford</div><div style="left:1145.7px;top:404.3px;width:94.29999999999995px;height:16.0px;background:#f6f7fb;border:1px solid #c8cedb;border-radius:1.5px;box-shadow:inset 0 0 0 0.5px #e4e8f0;box-sizing:border-box"></div><div class="t" style="left:1148.0px;top:407.6px;font-size:11px;color:#24328a;transform:scaleX(0.86);">Lüftungsanlage Herford</div><div style="left:1145.7px;top:423.6px;width:94.29999999999995px;height:16.0px;background:#fff;border:1px solid #c8cedb;border-radius:1.5px;box-shadow:inset 0 0 0 0.5px #e4e8f0;box-sizing:border-box"></div><div class="t" style="left:1148.0px;top:426.9px;font-size:11px;color:#111;transform:scaleX(0.86);">Lufttechnische Geräte</div><div style="left:1145.8px;top:444.3px;width:48.40000000000009px;height:16.0px;background:#fff;border:1px solid #c8cedb;border-radius:1.5px;box-shadow:inset 0 0 0 0.5px #e4e8f0;box-sizing:border-box"></div><div style="left:1145.8px;top:464.6px;width:48.40000000000009px;height:16.0px;background:#fff;border:1px solid #c8cedb;border-radius:1.5px;box-shadow:inset 0 0 0 0.5px #e4e8f0;box-sizing:border-box"></div><div style="left:1145.8px;top:485px;width:48.40000000000009px;height:16px;background:#fff;border:1px solid #c8cedb;border-radius:1.5px;box-shadow:inset 0 0 0 0.5px #e4e8f0;box-sizing:border-box"></div><div class="t" style="left:1198.8px;top:445.6px;font-size:11px;color:#222;transform:scaleX(0.86);">cm</div><div style="left:1225.5px;top:444.3px;width:55.700000000000045px;height:16.0px;background:#fff;border:1px solid #c8cedb;border-radius:1.5px;box-shadow:inset 0 0 0 0.5px #e4e8f0;box-sizing:border-box"></div><div class="t" style="left:1198.8px;top:466.0px;font-size:11px;color:#222;transform:scaleX(0.86);">m²</div><div class="t" style="left:1198.8px;top:485.6px;font-size:11px;color:#222;transform:scaleX(0.86);">cm</div><div style="left:1225.5px;top:485px;width:55.700000000000045px;height:16px;background:#fff;border:1px solid #c8cedb;border-radius:1.5px;box-shadow:inset 0 0 0 0.5px #e4e8f0;box-sizing:border-box"></div><div class="t" style="left:1285.8px;top:485.6px;font-size:11px;color:#222;transform:scaleX(0.86);">m³</div><div style="left:1145.8px;top:504.3px;width:48.40000000000009px;height:16.30000000000001px;background:#fff;border:1px solid #c8cedb;border-radius:1.5px;box-shadow:inset 0 0 0 0.5px #e4e8f0;box-sizing:border-box"></div><div class="t" style="left:1163.0px;top:506.0px;font-size:11px;color:#111;transform:scaleX(0.86);">46,00</div><div class="t" style="left:1198.0px;top:506.0px;font-size:11px;color:#222;transform:scaleX(0.86);">kg</div><div style="left:1145.8px;top:524.6px;width:120.20000000000005px;height:16.299999999999955px;background:#fff;border:1px solid #c8cedb;border-radius:1.5px;box-shadow:inset 0 0 0 0.5px #e4e8f0;box-sizing:border-box"></div><div style="left:1148.7px;top:527.6px;width:11.5px;height:11.5px;background:linear-gradient(135deg,#e6eaf0,#fafcff);border:1px solid #b4bccb;border-radius:1.5px;box-sizing:border-box"></div><div style="left:1242px;top:527.6px;width:10px;height:11px;background:linear-gradient(135deg,#f4f4f6,#c8ccd4);border:1px solid #6a6a6a;border-radius:2px 3px 3px 2px;box-sizing:border-box"></div><svg style="position:absolute;left:1253px;top:530.6px" width="7" height="5" viewBox="0 0 7 5"><path d="M0 0.5 H7 L3.5 4.5 Z" fill="#2a4aa0"/></svg><div style="left:1145.8px;top:545px;width:120.20000000000005px;height:16.299999999999955px;background:#fff;border:1px solid #c8cedb;border-radius:1.5px;box-shadow:inset 0 0 0 0.5px #e4e8f0;box-sizing:border-box"></div><div style="left:1148.7px;top:548px;width:11.5px;height:11.5px;background:linear-gradient(135deg,#e6eaf0,#fafcff);border:1px solid #b4bccb;border-radius:1.5px;box-sizing:border-box"></div><div style="left:1242px;top:548px;width:10px;height:11px;background:linear-gradient(135deg,#f4f4f6,#c8ccd4);border:1px solid #6a6a6a;border-radius:2px 3px 3px 2px;box-sizing:border-box"></div><svg style="position:absolute;left:1253px;top:551px" width="7" height="5" viewBox="0 0 7 5"><path d="M0 0.5 H7 L3.5 4.5 Z" fill="#2a4aa0"/></svg>
<div style="left:1787px;top:44px;width:11px;height:426.5px;background:#000"></div><div style="left:1324px;top:458px;width:474px;height:12.5px;background:#000"></div><div style="left:1238px;top:44px;width:549px;height:413.5px;background:#f2f2f2;border-top:1px solid #555;border-left:1px solid #444;border-bottom:1px solid #666;border-right:1px solid #fff;box-sizing:border-box"></div><div style="left:1242px;top:117px;width:537px;height:331.5px;background:#f8f8f8;border:1px solid #c9cdd2;border-radius:0 0 3px 3px;box-sizing:border-box"></div><div style="left:1243.7px;top:49.7px;width:106.29999999999995px;height:16.099999999999994px;background:linear-gradient(#ffffff 0%,#f0f0f8 45%,#dcdcee 100%);border:1px solid #a9b6c6;border-bottom:none;border-radius:3px 3px 0 0;box-sizing:border-box"></div><div class="t c" style="left:1243.7px;top:53.1px;width:106.29999999999995px;font-size:10.6px;color:#1c2a82"><span style="display:inline-block;transform:scaleX(0.93)">Mechanische Daten</span></div><div style="left:1352.5px;top:49.7px;width:55.799999999999955px;height:16.099999999999994px;background:linear-gradient(#ffffff 0%,#f0f0f8 45%,#dcdcee 100%);border:1px solid #a9b6c6;border-bottom:none;border-radius:3px 3px 0 0;box-sizing:border-box"></div><div class="t c" style="left:1352.5px;top:53.1px;width:55.799999999999955px;font-size:10.6px;color:#1c2a82"><span style="display:inline-block;transform:scaleX(0.93)">Verträge</span></div><div style="left:1410.8px;top:49.7px;width:87.90000000000009px;height:16.099999999999994px;background:linear-gradient(#ffffff 0%,#f0f0f8 45%,#dcdcee 100%);border:1px solid #a9b6c6;border-bottom:none;border-radius:3px 3px 0 0;box-sizing:border-box"></div><div class="t c" style="left:1410.8px;top:53.1px;width:87.90000000000009px;font-size:10.6px;color:#1c2a82"><span style="display:inline-block;transform:scaleX(0.93)">Mietverhältnisse</span></div><div style="left:1501.3px;top:49.7px;width:47.100000000000136px;height:16.099999999999994px;background:linear-gradient(#ffffff 0%,#f0f0f8 45%,#dcdcee 100%);border:1px solid #a9b6c6;border-bottom:none;border-radius:3px 3px 0 0;box-sizing:border-box"></div><div class="t c" style="left:1501.3px;top:53.1px;width:47.100000000000136px;font-size:10.6px;color:#1c2a82"><span style="display:inline-block;transform:scaleX(0.93)">CAD</span></div><div style="left:1550.8px;top:49.7px;width:62.90000000000009px;height:16.099999999999994px;background:linear-gradient(#ffffff 0%,#f0f0f8 45%,#dcdcee 100%);border:1px solid #a9b6c6;border-bottom:none;border-radius:3px 3px 0 0;box-sizing:border-box"></div><div class="t c" style="left:1550.8px;top:53.1px;width:62.90000000000009px;font-size:10.6px;color:#1c2a82"><span style="display:inline-block;transform:scaleX(0.93)">Ereignisse</span></div><div style="left:1616.5px;top:49.7px;width:79.5px;height:16.099999999999994px;background:linear-gradient(#ffffff 0%,#f0f0f8 45%,#dcdcee 100%);border:1px solid #a9b6c6;border-bottom:none;border-radius:3px 3px 0 0;box-sizing:border-box"></div><div class="t c" style="left:1616.5px;top:53.1px;width:79.5px;font-size:10.6px;color:#1c2a82"><span style="display:inline-block;transform:scaleX(0.93)">Auftragsserien</span></div><div style="left:1699px;top:49.7px;width:78px;height:16.099999999999994px;background:linear-gradient(#ffffff 0%,#f0f0f8 45%,#dcdcee 100%);border:1px solid #a9b6c6;border-bottom:none;border-radius:3px 3px 0 0;box-sizing:border-box"></div><div class="t c" style="left:1699px;top:53.1px;width:78px;font-size:10.6px;color:#1c2a82"><span style="display:inline-block;transform:scaleX(0.93)">Komponenten</span></div><div style="left:1243.7px;top:65.8px;width:78.79999999999995px;height:17.200000000000003px;background:linear-gradient(#ffffff 0%,#f0f0f8 45%,#dcdcee 100%);border:1px solid #a9b6c6;border-bottom:none;border-radius:3px 3px 0 0;box-sizing:border-box"></div><div class="t c" style="left:1243.7px;top:69.7px;width:78.79999999999995px;font-size:10.6px;color:#1c2a82"><span style="display:inline-block;transform:scaleX(0.93)">Zähler</span></div><div style="left:1324.8px;top:65.8px;width:100.70000000000005px;height:17.200000000000003px;background:linear-gradient(#ffffff 0%,#f0f0f8 45%,#dcdcee 100%);border:1px solid #a9b6c6;border-bottom:none;border-radius:3px 3px 0 0;box-sizing:border-box"></div><div class="t c" style="left:1324.8px;top:69.7px;width:100.70000000000005px;font-size:10.6px;color:#1c2a82"><span style="display:inline-block;transform:scaleX(0.93)">Dokumente</span></div><div style="left:1427.5px;top:65.8px;width:137.79999999999995px;height:17.200000000000003px;background:linear-gradient(#ffffff 0%,#f0f0f8 45%,#dcdcee 100%);border:1px solid #a9b6c6;border-bottom:none;border-radius:3px 3px 0 0;box-sizing:border-box"></div><div class="t c" style="left:1427.5px;top:69.7px;width:137.79999999999995px;font-size:10.6px;color:#1c2a82"><span style="display:inline-block;transform:scaleX(0.93)">Aufgaben / Aufträge</span></div><div style="left:1567.5px;top:65.8px;width:101.29999999999995px;height:17.200000000000003px;background:linear-gradient(#ffffff 0%,#f0f0f8 45%,#dcdcee 100%);border:1px solid #a9b6c6;border-bottom:none;border-radius:3px 3px 0 0;box-sizing:border-box"></div><div class="t c" style="left:1567.5px;top:69.7px;width:101.29999999999995px;font-size:10.6px;color:#1c2a82"><span style="display:inline-block;transform:scaleX(0.93)">Prüfberichte</span></div><div style="left:1671px;top:65.8px;width:106px;height:17.200000000000003px;background:linear-gradient(#ffffff 0%,#f0f0f8 45%,#dcdcee 100%);border:1px solid #a9b6c6;border-bottom:none;border-radius:3px 3px 0 0;box-sizing:border-box"></div><div class="t c" style="left:1671px;top:69.7px;width:106px;font-size:10.6px;color:#1c2a82"><span style="display:inline-block;transform:scaleX(0.93)">Rechnungen</span></div><div style="left:1243.7px;top:83px;width:134.5999999999999px;height:16.700000000000003px;background:linear-gradient(#ffffff 0%,#f0f0f8 45%,#dcdcee 100%);border:1px solid #a9b6c6;border-bottom:none;border-radius:3px 3px 0 0;box-sizing:border-box"></div><div class="t c" style="left:1243.7px;top:86.7px;width:134.5999999999999px;font-size:10.6px;color:#1c2a82"><span style="display:inline-block;transform:scaleX(0.93)">Bereitstellungspunkte</span></div><div style="left:1380.5px;top:83px;width:121.79999999999995px;height:16.700000000000003px;background:linear-gradient(#ffffff 0%,#f0f0f8 45%,#dcdcee 100%);border:1px solid #a9b6c6;border-bottom:none;border-radius:3px 3px 0 0;box-sizing:border-box"></div><div class="t c" style="left:1380.5px;top:86.7px;width:121.79999999999995px;font-size:10.6px;color:#1c2a82"><span style="display:inline-block;transform:scaleX(0.93)">Verbrauchspunkte</span></div><div style="left:1504.5px;top:83px;width:119.90000000000009px;height:16.700000000000003px;background:linear-gradient(#ffffff 0%,#f0f0f8 45%,#dcdcee 100%);border:1px solid #a9b6c6;border-bottom:none;border-radius:3px 3px 0 0;box-sizing:border-box"></div><div class="t c" style="left:1504.5px;top:86.7px;width:119.90000000000009px;font-size:10.6px;color:#1c2a82"><span style="display:inline-block;transform:scaleX(0.93)">EDV - Anschlüsse</span></div><div style="left:1627px;top:83px;width:77.40000000000009px;height:16.700000000000003px;background:linear-gradient(#ffffff 0%,#f0f0f8 45%,#dcdcee 100%);border:1px solid #a9b6c6;border-bottom:none;border-radius:3px 3px 0 0;box-sizing:border-box"></div><div class="t c" style="left:1627px;top:86.7px;width:77.40000000000009px;font-size:10.6px;color:#1c2a82"><span style="display:inline-block;transform:scaleX(0.93)">Reports</span></div><div style="left:1706.7px;top:83px;width:70.29999999999995px;height:16.700000000000003px;background:linear-gradient(#ffffff 0%,#f0f0f8 45%,#dcdcee 100%);border:1px solid #a9b6c6;border-bottom:none;border-radius:3px 3px 0 0;box-sizing:border-box"></div><div class="t c" style="left:1706.7px;top:86.7px;width:70.29999999999995px;font-size:10.6px;color:#1c2a82"><span style="display:inline-block;transform:scaleX(0.93)">Filter</span></div><div style="left:1243.7px;top:99.7px;width:64.29999999999995px;height:17.299999999999997px;background:linear-gradient(#ffffff 0%,#f0f0f8 45%,#dcdcee 100%);border:1px solid #a9b6c6;border-bottom:none;border-radius:3px 3px 0 0;box-sizing:border-box"></div><div class="t c" style="left:1243.7px;top:103.7px;width:64.29999999999995px;font-size:10.6px;color:#1c2a82"><span style="display:inline-block;transform:scaleX(0.93)"></span></div><div style="left:1366.5px;top:99.7px;width:77.5px;height:17.299999999999997px;background:linear-gradient(#ffffff 0%,#f0f0f8 45%,#dcdcee 100%);border:1px solid #a9b6c6;border-bottom:none;border-radius:3px 3px 0 0;box-sizing:border-box"></div><div class="t c" style="left:1366.5px;top:103.7px;width:77.5px;font-size:10.6px;color:#1c2a82"><span style="display:inline-block;transform:scaleX(0.93)">Techn. Daten</span></div><div style="left:1446.5px;top:99.7px;width:77.5px;height:17.299999999999997px;background:linear-gradient(#ffffff 0%,#f0f0f8 45%,#dcdcee 100%);border:1px solid #a9b6c6;border-bottom:none;border-radius:3px 3px 0 0;box-sizing:border-box"></div><div class="t c" style="left:1446.5px;top:103.7px;width:77.5px;font-size:10.6px;color:#1c2a82"><span style="display:inline-block;transform:scaleX(0.93)">Kaufm. Daten</span></div><div style="left:1526.6px;top:99.7px;width:123.70000000000005px;height:17.299999999999997px;background:linear-gradient(#ffffff 0%,#f0f0f8 45%,#dcdcee 100%);border:1px solid #a9b6c6;border-bottom:none;border-radius:3px 3px 0 0;box-sizing:border-box"></div><div class="t c" style="left:1526.6px;top:103.7px;width:123.70000000000005px;font-size:10.6px;color:#1c2a82"><span style="display:inline-block;transform:scaleX(0.93)">Elektrotechnische Daten</span></div><div style="left:1652.8px;top:99.7px;width:124.20000000000005px;height:17.299999999999997px;background:linear-gradient(#ffffff 0%,#f0f0f8 45%,#dcdcee 100%);border:1px solid #a9b6c6;border-bottom:none;border-radius:3px 3px 0 0;box-sizing:border-box"></div><div class="t c" style="left:1652.8px;top:103.7px;width:124.20000000000005px;font-size:10.6px;color:#1c2a82"><span style="display:inline-block;transform:scaleX(0.93)">HLS - Technische Daten</span></div><div style="left:1308px;top:98.5px;width:58.5px;height:19.0px;background:linear-gradient(#ffffff,#fafafa);border:1px solid #8a97ab;border-top:2px solid #5f7191;border-bottom:none;border-radius:3px 3px 0 0;box-sizing:border-box"></div><div class="t c" style="left:1308px;top:102.3px;width:58.5px;font-size:10.6px;color:#1c2a82"><span style="display:inline-block;transform:scaleX(0.93)">BGV A3</span></div><div class="t" style="left:1271.0px;top:103.5px;font-size:10.6px;color:#1c2a82;transform:scaleX(0.93);">Gerät</div><svg style="position:absolute;left:1247px;top:101.5px" width="16" height="16" viewBox="0 0 16 16"><path d="M1.8 14 L8 7.8" stroke="#111" stroke-width="3.8" stroke-linecap="round"/><circle cx="10.5" cy="5.3" r="4.7" fill="#111"/><path d="M1.8 14 L8 7.8" stroke="#d4d4d4" stroke-width="1.5" stroke-linecap="round"/><circle cx="10.5" cy="5.3" r="3.1" fill="#d4d4d4"/><path d="M9.2 4.2 L13.6 -0.2 L16.2 2.4 L11.8 6.8 Z" fill="#f4f4f8" stroke="#111" stroke-width="1.1"/><path d="M9 3.6 L14 -1.4 L17 1.6 L12.4 7 Z" fill="#f4f4f8"/><circle cx="10.6" cy="5.4" r="1.3" fill="#111"/><circle cx="10.9" cy="5.1" r="0.9" fill="#fff"/></svg><div class="t" style="left:1248.4px;top:130.5px;font-size:11px;color:#222;transform:scaleX(0.87);">Geräteart</div><div class="t" style="left:1248.4px;top:149.7px;font-size:11px;color:#222;transform:scaleX(0.87);">Typ / Modell</div><div class="t" style="left:1248.4px;top:169.2px;font-size:11px;color:#222;transform:scaleX(0.87);">Baujahr</div><div class="t" style="left:1248.4px;top:193.7px;font-size:11px;color:#24328a;transform:scaleX(0.87);">GS Zeichen</div><div class="t" style="left:1248.4px;top:212.2px;font-size:11px;color:#24328a;transform:scaleX(0.87);">CE Zeichen</div><div class="t" style="left:1248.4px;top:230.7px;font-size:11px;color:#24328a;transform:scaleX(0.87);">VDE Zeichen</div><div class="t" style="left:1248.4px;top:249.5px;font-size:11px;color:#222;transform:scaleX(0.87);">Netzkabel</div><div class="t" style="left:1248.4px;top:287.9px;font-size:11px;color:#222;transform:scaleX(0.87);">Prüfberichte</div><div class="t" style="left:1248.4px;top:387.6px;font-size:11px;color:#222;transform:scaleX(0.87);">Bemerkung</div><div style="left:1320.8px;top:129.8px;width:189.20000000000005px;height:16.599999999999994px;background:#f6f7fb;border:1px solid #c8cedb;border-radius:1.5px;box-shadow:inset 0 0 0 0.5px #e4e8f0;box-sizing:border-box"></div><div class="t" style="left:1323.0px;top:133.2px;font-size:11px;color:#24328a;transform:scaleX(0.86);">Abluftventilator</div><div style="left:1320.8px;top:150px;width:189.20000000000005px;height:16.5px;background:#f6f7fb;border:1px solid #c8cedb;border-radius:1.5px;box-shadow:inset 0 0 0 0.5px #e4e8f0;box-sizing:border-box"></div><div class="t" style="left:1323.0px;top:153.5px;font-size:11px;color:#24328a;transform:scaleX(0.86);">CHVB/4-3000/315</div><div style="left:1320.8px;top:168.4px;width:41.90000000000009px;height:16.599999999999994px;background:#fff;border:1px solid #c8cedb;border-radius:1.5px;box-shadow:inset 0 0 0 0.5px #e4e8f0;box-sizing:border-box"></div><div class="t" style="left:1323.0px;top:172.0px;font-size:11px;color:#111;transform:scaleX(0.86);">2013</div><div class="t" style="left:1378.7px;top:171.0px;font-size:11px;color:#222;transform:scaleX(0.87);">Spannung</div><div style="left:1434.3px;top:170px;width:39.200000000000045px;height:16.599999999999994px;background:#fff;border:1px solid #c8cedb;border-radius:1.5px;box-shadow:inset 0 0 0 0.5px #e4e8f0;box-sizing:border-box"></div><div class="t" style="left:1442.0px;top:173.7px;font-size:11px;color:#111;transform:scaleX(0.86);">230,00</div><div style="left:1474.3px;top:170px;width:19.299999999999955px;height:16.599999999999994px;background:linear-gradient(#ffffff,#f4f6fa 55%,#e2e8f0);border:1px solid #c8ccd4;border-radius:2.5px;box-sizing:border-box"></div><svg style="position:absolute;left:1474.3px;top:170px" width="19.299999999999955" height="16.599999999999994" viewBox="0 0 19 16" preserveAspectRatio="none"><path d="M4.9 3.4 L13.6 3.4 L13.6 12.5 L11.3 10.2 L8.1 13.3 L3.5 8.7 L6.7 5.6 Z" fill="#ee1010" stroke="#a00808" stroke-width="0.6" stroke-linejoin="round"/><path d="M4.8 8.7 L7.6 5.9" stroke="#ffb0b0" stroke-width="1.1"/><path d="M8 12 L13 7" stroke="#c00000" stroke-width="0.8"/></svg><div class="t" style="left:1500.5px;top:171.7px;font-size:11px;color:#222;transform:scaleX(0.9);">V</div><div class="t" style="left:1378.7px;top:191.1px;font-size:11px;color:#222;transform:scaleX(0.87);">Stromstärke</div><div style="left:1434.3px;top:190.4px;width:59.299999999999955px;height:16.599999999999994px;background:#fff;border:1px solid #c8cedb;border-radius:1.5px;box-shadow:inset 0 0 0 0.5px #e4e8f0;box-sizing:border-box"></div><div class="t" style="left:1500.5px;top:192.2px;font-size:11px;color:#222;transform:scaleX(0.9);">A</div><div class="t" style="left:1378.7px;top:210.7px;font-size:11px;color:#222;transform:scaleX(0.87);">Leistung</div><div style="left:1434.3px;top:211.4px;width:59.299999999999955px;height:16.599999999999994px;background:#fff;border:1px solid #c8cedb;border-radius:1.5px;box-shadow:inset 0 0 0 0.5px #e4e8f0;box-sizing:border-box"></div><div class="t" style="left:1500.5px;top:211.7px;font-size:11px;color:#222;transform:scaleX(0.9);">W</div><div style="left:1342.9px;top:193.2px;width:11.6px;height:11.8px;background:linear-gradient(135deg,#e4e6ea,#fafafa);border:1px solid #a8b0bc;box-sizing:border-box"></div><div style="left:1342.9px;top:212px;width:11.6px;height:11.8px;background:linear-gradient(135deg,#e4e6ea,#fafafa);border:1px solid #a8b0bc;box-sizing:border-box"></div><div style="left:1342.9px;top:230.4px;width:11.6px;height:11.8px;background:linear-gradient(135deg,#e4e6ea,#fafafa);border:1px solid #a8b0bc;box-sizing:border-box"></div><div style="left:1467.4px;top:230.7px;width:26.2px;height:16.3px;background:linear-gradient(#fbfbfb,#e2e4e8);border:1px solid #cdd0d8;border-radius:2px;box-sizing:border-box"></div><svg style="position:absolute;left:1474px;top:233px" width="12" height="12" viewBox="0 0 12 12"><rect x="0.5" y="0.5" width="11" height="11" fill="#f5e600" stroke="#222" stroke-width="1"/><path d="M7 1.5 L3.5 6.5 H6 L4.5 10.5 L8.5 5 H6 Z" fill="#e02020"/></svg><div style="left:1320.8px;top:249px;width:35.0px;height:16.600000000000023px;background:#fff;border:1px solid #c8cedb;border-radius:1.5px;box-shadow:inset 0 0 0 0.5px #e4e8f0;box-sizing:border-box"></div><div class="t" style="left:1362.7px;top:249.7px;font-size:11px;color:#222;transform:scaleX(0.9);">m</div><div style="left:1381.5px;top:249px;width:110.09999999999991px;height:16.600000000000023px;background:#fff;border:1px solid #c8cedb;border-radius:1.5px;box-shadow:inset 0 0 0 0.5px #e4e8f0;box-sizing:border-box"></div><div class="t" style="left:1384.0px;top:253.0px;font-size:11px;color:#111;transform:scaleX(0.86);">n.v.</div><div style="left:1492.7px;top:249px;width:18.799999999999955px;height:16.600000000000023px;background:linear-gradient(#ffffff,#f4f6fa 55%,#e2e8f0);border:1px solid #c8ccd4;border-radius:2.5px;box-sizing:border-box"></div><svg style="position:absolute;left:1492.7px;top:249px" width="18.799999999999955" height="16.600000000000023" viewBox="0 0 19 16" preserveAspectRatio="none"><path d="M4.9 3.4 L13.6 3.4 L13.6 12.5 L11.3 10.2 L8.1 13.3 L3.5 8.7 L6.7 5.6 Z" fill="#ee1010" stroke="#a00808" stroke-width="0.6" stroke-linejoin="round"/><path d="M4.8 8.7 L7.6 5.9" stroke="#ffb0b0" stroke-width="1.1"/><path d="M8 12 L13 7" stroke="#c00000" stroke-width="0.8"/></svg><div class="t" style="left:1530.7px;top:130.5px;font-size:11px;color:#222;transform:scaleX(0.87);">Schutzklasse</div><div class="t" style="left:1530.7px;top:149.7px;font-size:11px;color:#222;transform:scaleX(0.87);">Schutzart</div><div class="t" style="left:1530.7px;top:168.2px;font-size:11px;color:#222;transform:scaleX(0.87);">Beweglichkeit</div><div class="t" style="left:1530.7px;top:188.2px;font-size:11px;color:#222;transform:scaleX(0.87);">Gefährdungsklasse</div><div class="t" style="left:1530.7px;top:208.7px;font-size:11px;color:#222;transform:scaleX(0.87);">Heizelemente</div><div class="t" style="left:1530.7px;top:229.6px;font-size:11px;color:#222;transform:scaleX(0.87);">Anzahl der Motoren / Transformatoren</div><div class="t" style="left:1530.7px;top:248.8px;font-size:11px;color:#222;transform:scaleX(0.87);">Gerätestatus</div><div class="t" style="left:1530.7px;top:268.1px;font-size:11px;color:#222;transform:scaleX(0.87);">Status Prüfvorschrift</div><div style="left:1631.2px;top:130.7px;width:116.29999999999995px;height:15.700000000000017px;background:#fff;border:1px solid #c8cedb;border-radius:1.5px;box-shadow:inset 0 0 0 0.5px #e4e8f0;box-sizing:border-box"></div><div class="t" style="left:1633.5px;top:134.0px;font-size:11px;color:#111;transform:scaleX(0.86);">Schutzkleinspannung</div><div style="left:1748.3px;top:130.7px;width:19.299999999999955px;height:15.700000000000017px;background:linear-gradient(#ffffff,#f4f6fa 55%,#e2e8f0);border:1px solid #c8ccd4;border-radius:2.5px;box-sizing:border-box"></div><svg style="position:absolute;left:1748.3px;top:130.7px" width="19.299999999999955" height="15.700000000000017" viewBox="0 0 19 16" preserveAspectRatio="none"><path d="M4.9 3.4 L13.6 3.4 L13.6 12.5 L11.3 10.2 L8.1 13.3 L3.5 8.7 L6.7 5.6 Z" fill="#ee1010" stroke="#a00808" stroke-width="0.6" stroke-linejoin="round"/><path d="M4.8 8.7 L7.6 5.9" stroke="#ffb0b0" stroke-width="1.1"/><path d="M8 12 L13 7" stroke="#c00000" stroke-width="0.8"/></svg><div style="left:1631.2px;top:150.5px;width:116.29999999999995px;height:15.5px;background:#fff;border:1px solid #c8cedb;border-radius:1.5px;box-shadow:inset 0 0 0 0.5px #e4e8f0;box-sizing:border-box"></div><div class="t" style="left:1633.5px;top:153.5px;font-size:11px;color:#111;transform:scaleX(0.86);">IP 65</div><div style="left:1748.3px;top:150.5px;width:19.299999999999955px;height:15.5px;background:linear-gradient(#ffffff,#f4f6fa 55%,#e2e8f0);border:1px solid #c8ccd4;border-radius:2.5px;box-sizing:border-box"></div><svg style="position:absolute;left:1748.3px;top:150.5px" width="19.299999999999955" height="15.5" viewBox="0 0 19 16" preserveAspectRatio="none"><path d="M4.9 3.4 L13.6 3.4 L13.6 12.5 L11.3 10.2 L8.1 13.3 L3.5 8.7 L6.7 5.6 Z" fill="#ee1010" stroke="#a00808" stroke-width="0.6" stroke-linejoin="round"/><path d="M4.8 8.7 L7.6 5.9" stroke="#ffb0b0" stroke-width="1.1"/><path d="M8 12 L13 7" stroke="#c00000" stroke-width="0.8"/></svg><div style="left:1631.2px;top:168.4px;width:136.39999999999986px;height:18.19999999999999px;background:#fff;border:1px solid #c8cedb;border-radius:1.5px;box-shadow:inset 0 0 0 0.5px #e4e8f0;box-sizing:border-box"></div><div style="left:1751.9px;top:169.4px;width:14.699999999999818px;height:16.19999999999999px;background:linear-gradient(#f6f6fa,#e6e8f0);border-left:1px solid #dde0e8"></div><svg style="position:absolute;left:1755.75px;top:174.0px" width="7" height="7" viewBox="0 0 7 7"><rect x="0.3" y="0.2" width="6.4" height="1.8" fill="#6274a8"/><path d="M0.3 2.4 H6.7 L3.5 6.2 Z" fill="#1f3a8a"/></svg><div class="t" style="left:1634.0px;top:173.1px;font-size:11px;color:#111;transform:scaleX(0.86);">Ortsfest</div><div style="left:1631.2px;top:189.3px;width:136.39999999999986px;height:17.69999999999999px;background:#fff;border:1px solid #c8cedb;border-radius:1.5px;box-shadow:inset 0 0 0 0.5px #e4e8f0;box-sizing:border-box"></div><div style="left:1751.9px;top:190.3px;width:14.699999999999818px;height:15.699999999999989px;background:linear-gradient(#f6f6fa,#e6e8f0);border-left:1px solid #dde0e8"></div><svg style="position:absolute;left:1755.75px;top:194.65px" width="7" height="7" viewBox="0 0 7 7"><rect x="0.3" y="0.2" width="6.4" height="1.8" fill="#6274a8"/><path d="M0.3 2.4 H6.7 L3.5 6.2 Z" fill="#1f3a8a"/></svg><div style="left:1631.2px;top:209.7px;width:136.39999999999986px;height:18.200000000000017px;background:#fff;border:1px solid #c8cedb;border-radius:1.5px;box-shadow:inset 0 0 0 0.5px #e4e8f0;box-sizing:border-box"></div><div style="left:1751.9px;top:210.7px;width:14.699999999999818px;height:16.200000000000017px;background:linear-gradient(#f6f6fa,#e6e8f0);border-left:1px solid #dde0e8"></div><svg style="position:absolute;left:1755.75px;top:215.3px" width="7" height="7" viewBox="0 0 7 7"><rect x="0.3" y="0.2" width="6.4" height="1.8" fill="#6274a8"/><path d="M0.3 2.4 H6.7 L3.5 6.2 Z" fill="#1f3a8a"/></svg><div style="left:1631.2px;top:269.2px;width:136.39999999999986px;height:17.69999999999999px;background:#fff;border:1px solid #c8cedb;border-radius:1.5px;box-shadow:inset 0 0 0 0.5px #e4e8f0;box-sizing:border-box"></div><div style="left:1751.9px;top:270.2px;width:14.699999999999818px;height:15.699999999999989px;background:linear-gradient(#f6f6fa,#e6e8f0);border-left:1px solid #dde0e8"></div><svg style="position:absolute;left:1755.75px;top:274.54999999999995px" width="7" height="7" viewBox="0 0 7 7"><rect x="0.3" y="0.2" width="6.4" height="1.8" fill="#6274a8"/><path d="M0.3 2.4 H6.7 L3.5 6.2 Z" fill="#1f3a8a"/></svg><div style="left:1727px;top:229.8px;width:39.700000000000045px;height:16.599999999999994px;background:#fff;border:1px solid #c8cedb;border-radius:1.5px;box-shadow:inset 0 0 0 0.5px #e4e8f0;box-sizing:border-box"></div><div style="left:1631.2px;top:250px;width:116.29999999999995px;height:15.600000000000023px;background:#e2e000;border:1px solid #d0d0a0;border-radius:1.5px;box-shadow:inset 0 0 0 0.5px #e4e8f0;box-sizing:border-box"></div><div class="t" style="left:1633.5px;top:253.2px;font-size:11px;color:#111;transform:scaleX(0.86);">geprüft</div><div style="left:1748.3px;top:250px;width:19.299999999999955px;height:15.600000000000023px;background:linear-gradient(#ffffff,#f4f6fa 55%,#e2e8f0);border:1px solid #c8ccd4;border-radius:2.5px;box-sizing:border-box"></div><svg style="position:absolute;left:1748.3px;top:250px" width="19.299999999999955" height="15.600000000000023" viewBox="0 0 19 16" preserveAspectRatio="none"><path d="M4.9 3.4 L13.6 3.4 L13.6 12.5 L11.3 10.2 L8.1 13.3 L3.5 8.7 L6.7 5.6 Z" fill="#ee1010" stroke="#a00808" stroke-width="0.6" stroke-linejoin="round"/><path d="M4.8 8.7 L7.6 5.9" stroke="#ffb0b0" stroke-width="1.1"/><path d="M8 12 L13 7" stroke="#c00000" stroke-width="0.8"/></svg><div style="left:1321.4px;top:292.4px;width:449px;height:65.5px;background:#eef0f6;border:1px solid #a9b6cc;box-sizing:border-box"></div><div style="left:1322.4px;top:293.4px;width:431px;height:22px;background:linear-gradient(#f6f6f6,#ececee)"></div><div style="left:1322.4px;top:315.3px;width:431px;height:14.7px;background:#fff"></div><div style="left:1322.4px;top:330px;width:431px;height:14.7px;background:#eeeeee"></div><div style="left:1340px;top:294px;width:1px;height:21px;background:#d2d6e2"></div><div style="left:1450.9px;top:294px;width:1px;height:21px;background:#d2d6e2"></div><div style="left:1526.2px;top:294px;width:1px;height:21px;background:#d2d6e2"></div><div style="left:1611.6px;top:294px;width:1px;height:21px;background:#d2d6e2"></div><div style="left:1673.6px;top:294px;width:1px;height:21px;background:#d2d6e2"></div><div style="left:1322.4px;top:315.3px;width:431px;height:1px;background:#d8dce8"></div><div style="left:1322.4px;top:315.3px;width:17.6px;height:29.4px;background:#eeeeee"></div><div style="left:1323.5px;top:316.5px;width:15px;height:13px;background:#eef0f8;border:1px solid #d8dce8;box-sizing:border-box"></div><div style="left:1339.5px;top:315.3px;width:1px;height:29px;background:#d2d6e2"></div><div style="left:1322.4px;top:331px;width:17px;height:14px;background:#f0f0f2;border-left:1.5px solid #8090a8;border-top:1.5px solid #8090a8;box-sizing:border-box"></div><div class="t" style="left:1329.0px;top:299.6px;font-size:11px;color:#1c2a82;transform:scaleX(0.86);">3</div><div class="t" style="left:1344.0px;top:299.6px;font-size:11px;color:#1c2a82;transform:scaleX(0.86);">Art der Prüfung</div><div class="t" style="left:1457.8px;top:299.6px;font-size:11px;color:#1c2a82;transform:scaleX(0.86);">Prüfberichts-Nr</div><div class="t" style="left:1531.7px;top:299.6px;font-size:11px;color:#1c2a82;transform:scaleX(0.86);">Name des Prüfers</div><div class="t" style="left:1617.9px;top:299.6px;font-size:11px;color:#1c2a82;transform:scaleX(0.86);">Prüfdatum</div><div class="t" style="left:1679.6px;top:299.6px;font-size:11px;color:#1c2a82;transform:scaleX(0.86);">Nächste Prüfung</div><div class="t" style="left:1328.5px;top:318.9px;font-size:11px;color:#1c2a82;transform:scaleX(0.86);">1</div><div class="t" style="left:1344.0px;top:318.9px;font-size:11px;color:#111;transform:scaleX(0.86);">STK</div><div class="t" style="left:1457.8px;top:318.9px;font-size:11px;color:#111;transform:scaleX(0.86);">0064900-000</div><div class="t" style="left:1531.7px;top:318.9px;font-size:11px;color:#111;transform:scaleX(0.86);">Prüfer1</div><div class="t" style="left:1617.9px;top:318.9px;font-size:11px;color:#111;transform:scaleX(0.86);">26.03.2014</div><div class="t" style="left:1679.6px;top:318.9px;font-size:11px;color:#111;transform:scaleX(0.86);">26.03.2015</div><div class="t" style="left:1328.5px;top:333.4px;font-size:11px;color:#1c2a82;transform:scaleX(0.86);">2</div><div class="t" style="left:1344.0px;top:333.4px;font-size:11px;color:#111;transform:scaleX(0.86);">Wartung</div><div class="t" style="left:1457.8px;top:333.4px;font-size:11px;color:#111;transform:scaleX(0.86);">0064900-000</div><div class="t" style="left:1531.7px;top:333.4px;font-size:11px;color:#111;transform:scaleX(0.86);">MA-Test</div><div class="t" style="left:1617.9px;top:333.4px;font-size:11px;color:#111;transform:scaleX(0.86);">16.03.2014</div><div class="t" style="left:1679.6px;top:333.4px;font-size:11px;color:#111;transform:scaleX(0.86);">16.03.2015</div><div style="left:1322.4px;top:344.5px;width:431px;height:12.5px;background:#f0f2f6"></div><div style="left:1338.5px;top:345px;width:255px;height:12px;background:linear-gradient(#f4f8fe,#c8d4e6);border:1px solid #7d8ba8;border-radius:3px;box-sizing:border-box"></div><div style="left:1465px;top:348px;width:4px;height:6px;background:repeating-linear-gradient(90deg,#8a94a8 0 1px,transparent 1px 2px)"></div><svg style="position:absolute;left:1328px;top:347px" width="6" height="8" viewBox="0 0 6 8"><path d="M5 0 V8 L0.5 4 Z" fill="#1c2a82"/></svg><svg style="position:absolute;left:1743px;top:347px" width="6" height="8" viewBox="0 0 6 8"><path d="M1 0 V8 L5.5 4 Z" fill="#111"/></svg><div style="left:1753.4px;top:293.4px;width:16px;height:63px;background:#f4f5f8"></div><svg style="position:absolute;left:1755px;top:296px" width="12" height="50" viewBox="0 0 12 50"><path d="M1 7 L6 2 L11 7 Z" fill="#1c2a82"/><rect x="1.5" y="11.5" width="9" height="11" fill="#eef2fa" stroke="#7d8ba8"/><path d="M3.5 14.5 H8.5 M3.5 16.5 H8.5 M3.5 18.5 H8.5" stroke="#8a94a8"/><path d="M1 38 L6 43 L11 38 Z" fill="#1c2a82"/></svg><div style="left:1321.4px;top:361.3px;width:110.59999999999991px;height:15.699999999999989px;background:linear-gradient(#fbfbfc,#e9ebf1 60%,#d9dde7);border:1px solid #c4c9d4;border-radius:2px;box-sizing:border-box"></div><div class="t" style="left:1374px;top:363.9px;font-size:11px;color:#111;transform:scaleX(0.86)"><u style="text-decoration-thickness:1px;text-underline-offset:1px">N</u>eu</div><svg style="position:absolute;left:1324px;top:362px" width="15" height="14" viewBox="0 0 15 14"><path d="M4 2.5 H10 L13 5.5 V13.5 H4 Z" fill="#fafafa" stroke="#111" stroke-width="1"/><path d="M6 7 H11 M6 9 H11 M6 11 H11" stroke="#333" stroke-width="0.9"/><path d="M3 0.5 V6.5 M0 3.5 H6 M1 1.5 L5 5.5 M5 1.5 L1 5.5" stroke="#e8d000" stroke-width="1.1"/><circle cx="3" cy="3.5" r="1" fill="#fff8a0"/></svg><div style="left:1433px;top:361.3px;width:110px;height:15.699999999999989px;background:linear-gradient(#fbfbfc,#e9ebf1 60%,#d9dde7);border:1px solid #c4c9d4;border-radius:2px;box-sizing:border-box"></div><div class="t" style="left:1476px;top:363.9px;font-size:11px;color:#111;transform:scaleX(0.86)"><u style="text-decoration-thickness:1px;text-underline-offset:1px">K</u>opieren</div><svg style="position:absolute;left:1435px;top:362px" width="14" height="14" viewBox="0 0 14 14"><path d="M1 1 H6 L8 3 V10 H1 Z" fill="#fff" stroke="#222"/><path d="M5 4 H10 L12 6 V13 H5 Z" fill="#e8ecf8" stroke="#1c2a82"/><path d="M7 8 H10 M7 10 H10" stroke="#1c2a82"/></svg><div style="left:1544.6px;top:361.3px;width:110.20000000000005px;height:15.699999999999989px;background:linear-gradient(#fbfbfc,#e9ebf1 60%,#d9dde7);border:1px solid #c4c9d4;border-radius:2px;box-sizing:border-box"></div><div class="t" style="left:1588px;top:363.9px;font-size:11px;color:#111;transform:scaleX(0.86)"><u style="text-decoration-thickness:1px;text-underline-offset:1px">L</u>öschen</div><svg style="position:absolute;left:1548px;top:362px" width="14" height="14" viewBox="0 0 14 14"><path d="M1.5 1.5 L12.5 12.5 M12.5 1.5 L1.5 12.5" stroke="#e02020" stroke-width="1.8"/></svg><div style="left:1656.5px;top:361.3px;width:110.70000000000005px;height:15.699999999999989px;background:linear-gradient(#fbfbfc,#e9ebf1 60%,#d9dde7);border:1px solid #c4c9d4;border-radius:2px;box-sizing:border-box"></div><div class="t" style="left:1695px;top:363.9px;font-size:11px;color:#111;transform:scaleX(0.86)"><u style="text-decoration-thickness:1px;text-underline-offset:1px">B</u>earbeiten</div><svg style="position:absolute;left:1660px;top:362px" width="14" height="14" viewBox="0 0 14 14"><path d="M1 3 H10 V13 H1 Z" fill="#fff" stroke="#222"/><path d="M3 6 H8 M3 8 H6" stroke="#444"/><path d="M8 9 L12.5 1.5 L13.5 2.5 L9 10 Z" fill="#e8c000" stroke="#333" stroke-width="0.6"/></svg><div style="left:1321px;top:384px;width:449.5px;height:35px;background:#fff;border:1px solid #c8cedb;border-radius:1.5px;box-shadow:inset 0 0 0 0.5px #e4e8f0;box-sizing:border-box"></div><svg style="position:absolute;left:1756px;top:387px" width="10" height="28" viewBox="0 0 10 28"><path d="M1 8 L5 4 L9 8 Z" fill="#a8b4cc"/><path d="M1 21 L5 25 L9 21 Z" fill="#a8b4cc"/></svg><div style="left:1246px;top:428.5px;width:529px;height:1.5px;background:#d4dae4"></div><div style="left:1246.5px;top:431px;width:119.5px;height:15.7px;background:linear-gradient(#fbfbfc,#e9ebf1 60%,#d9dde7);border:1px solid #c4c9d4;border-radius:2px;box-sizing:border-box"></div><svg style="position:absolute;left:1249.5px;top:432px" width="12" height="14" viewBox="0 0 12 14"><path d="M1 1 H8 L11 4 V13 H1 Z" fill="#f8f8f8" stroke="#222"/><path d="M2.5 7 Q6 3 9.5 6" stroke="#c03030" stroke-width="1.2" fill="none"/><path d="M6 10 L8 6" stroke="#111" stroke-width="1.2"/></svg><div class="t" style="left:1269.5px;top:433.6px;font-size:11px;color:#111;transform:scaleX(0.86);">In Mebedo anzeigen</div><div style="left:1370.4px;top:431px;width:119.59999999999991px;height:15.7px;background:linear-gradient(#fbfbfc,#e9ebf1 60%,#d9dde7);border:1px solid #c4c9d4;border-radius:2px;box-sizing:border-box"></div><svg style="position:absolute;left:1373.4px;top:432px" width="12" height="14" viewBox="0 0 12 14"><path d="M1 1 H8 L11 4 V13 H1 Z" fill="#f8f8f8" stroke="#222"/><path d="M2.5 7 Q6 3 9.5 6" stroke="#c03030" stroke-width="1.2" fill="none"/><path d="M6 10 L8 6" stroke="#111" stroke-width="1.2"/></svg><div class="t" style="left:1402.0px;top:433.6px;font-size:11px;color:#111;transform:scaleX(0.86);">Gerät importieren</div><div style="left:1238px;top:457.5px;width:86px;height:9px;background:linear-gradient(rgba(0,0,0,0.5),rgba(0,0,0,0))"></div>
</div></body></html>
